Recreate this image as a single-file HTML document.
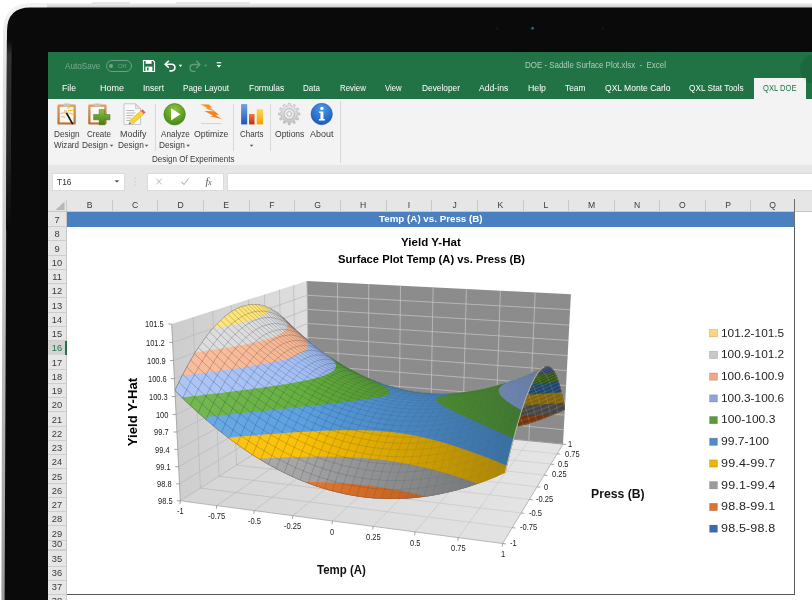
<!DOCTYPE html>
<html lang="en">
<head>
<meta charset="utf-8">
<title>DOE - Saddle Surface Plot.xlsx - Excel</title>
<style>
*{box-sizing:border-box;margin:0;padding:0}
html,body{width:812px;height:600px;overflow:hidden;background:#fff}
body{font-family:"Liberation Sans","DejaVu Sans",sans-serif;position:relative}
.abs{position:absolute}
#frame{left:3px;top:3px;width:830px;height:620px;border-radius:26px 0 0 0;background:linear-gradient(90deg,#dcdcdc 0,#e9e9e9 3px,#cfcfcf 4px,#cfcfcf 100%)}
#topstrip{left:47px;top:3px;width:780px;height:5px;background:linear-gradient(180deg,#f2f2f2,#cfcfcf)}
#bezel{left:7px;top:7.5px;width:830px;height:620px;border-radius:23px 0 0 0;background:#0a0a0a}
#bezelside{left:7px;top:30px;width:4px;height:600px;background:#262626}
#screen{left:47.5px;top:52px;width:780px;height:560px;background:#fff;overflow:hidden}
/* everything inside #screen is positioned in page coords via offset wrapper */
#s{left:-47.5px;top:-52px;width:812px;height:600px}
#green{left:47px;top:52px;width:770px;height:47px;background:#217346}
.tt{color:#fff;font-size:8px;line-height:10px;white-space:nowrap;filter:blur(.25px)}
.tab{top:83px;opacity:.96}
#acttab{left:754px;top:78px;width:52px;height:21px;background:#f3f3f3}
#ribbon{left:47px;top:99px;width:770px;height:65.5px;background:#f3f3f3}
#fbar{left:47px;top:164.5px;width:770px;height:34px;background:#e6e6e6}
.rb{color:#3b3b3b;font-size:8.6px;line-height:11.5px;text-align:center;white-space:nowrap;filter:blur(.25px)}
.sep{width:1px;background:#d8d8d8}
.box{background:#fff;border:1px solid #dadada;height:17.5px;top:173px}
#colhdr{left:47px;top:198px;width:770px;height:13.5px;background:#e6e6e6}
.ch{top:199.5px;width:45.5px;text-align:center;font-size:8.6px;line-height:11px;color:#3a3a3a;filter:blur(.25px)}
.cs{top:200px;width:1px;height:11.5px;background:#c9c9c9}
#rowhdr{left:47px;top:211.5px;width:19.5px;height:400px;background:#e6e6e6}
.rh{left:47.5px;width:19px;text-align:center;font-size:8.8px;line-height:11px;color:#3a3a3a;filter:blur(.25px)}
.rl{left:47.5px;width:19px;height:1px;background:#cdcdcd}
#band{left:66.5px;top:211.5px;width:728.3px;height:15px;background:#4a80c0;color:#fff;font-weight:bold;font-size:9.3px;line-height:15px;text-align:center}
.t{position:absolute;white-space:pre;filter:blur(.22px);transform-origin:0 50%}
</style>
</head>
<body>
<svg class="abs" style="left:0;top:0" width="812" height="600" viewBox="0 0 812 600">
<defs>
<linearGradient id="fr1" x1="0" y1="0" x2="0" y2="1"><stop offset="0" stop-color="#f3f3f3"/><stop offset=".12" stop-color="#e2e2e2"/><stop offset=".4" stop-color="#c8c8c8"/><stop offset="1" stop-color="#9c9c9c"/></linearGradient>
<linearGradient id="fr2" x1="0" y1="0" x2="0" y2="1"><stop offset="0" stop-color="#f4f4f4"/><stop offset="1" stop-color="#c6c6c6"/></linearGradient>
<linearGradient id="fr3" gradientUnits="userSpaceOnUse" x1="0" y1="40" x2="0" y2="230"><stop offset="0" stop-color="#0a0a0a"/><stop offset=".08" stop-color="#343434"/><stop offset=".6" stop-color="#262626"/><stop offset="1" stop-color="#0a0a0a"/></linearGradient>
</defs>
<path d="M3 32Q3 3 32 3H812V600H1.4Z" fill="url(#fr1)"/>
<rect x="47" y="3" width="765" height="5" fill="url(#fr2)"/>
<rect x="92" y="2.2" width="38" height="1.6" rx=".8" fill="#dedede"/><rect x="176" y="2.2" width="74" height="1.6" rx=".8" fill="#dedede"/>
<path d="M7 31Q7 7.5 30.5 7.5H812V600H4.6Z" fill="#0a0a0a"/>
<path d="M6.9 40L6 230H10.5L11.6 40Z" fill="url(#fr3)"/>
<circle cx="532.5" cy="28.3" r="1.7" fill="#1d3f52"/><circle cx="532.5" cy="28.3" r=".8" fill="#3f86a8"/>
<circle cx="497" cy="28.5" r="1.5" fill="#141414"/><circle cx="603" cy="28.5" r="1.5" fill="#141414"/>
</svg>
<div id="screen" class="abs"><div id="s" class="abs">
<div id="green" class="abs"></div>
<div id="acttab" class="abs"></div>
<div class="abs" style="left:105.5px;top:60px;width:26.5px;height:11.5px;border:1px solid rgba(255,255,255,.32);border-radius:6px"></div>
<div class="abs" style="left:109px;top:63.6px;width:4.4px;height:4.4px;border-radius:50%;background:rgba(255,255,255,.35)"></div>
<div class="t" style="left:118px;top:62.6px;font-size:6px;line-height:6px;color:rgba(255,255,255,.32);letter-spacing:.2px">Off</div>
<svg class="abs" style="left:140px;top:56px" width="90" height="20" viewBox="140 56 90 20">
<path d="M143.5 60.5h9.6l1.4 1.4v9.6h-11z" fill="none" stroke="#fff" stroke-width="1.2"/><rect x="145.6" y="60.5" width="6" height="3.3" fill="#fff"/><rect x="145.4" y="66.6" width="7" height="4.9" fill="#fff"/><rect x="147" y="67.6" width="1.6" height="2.8" fill="#217346"/>
<path d="M166 64.3h5.6a3.3 3.3 0 0 1 0 6.6h-2.2" fill="none" stroke="#fff" stroke-width="1.6"/><path d="M168.8 60.8l-3.6 3.5 3.6 3.5" fill="none" stroke="#fff" stroke-width="1.6"/>
<path d="M178.6 64.8h3.6l-1.8 2.2z" fill="#fff"/>
<g opacity=".3"><path d="M199 64.5h-5.6a3.4 3.4 0 0 0 0 6.8h2.2" fill="none" stroke="#fff" stroke-width="1.3"/><path d="M196.2 60.8l3.8 3.7-3.8 3.7" fill="none" stroke="#fff" stroke-width="1.3"/><path d="M204 64.8h3.2l-1.6 2z" fill="#fff"/></g>
<rect x="216.6" y="62.2" width="4.6" height="1.1" fill="#fff"/><path d="M216.6 65h4.6l-2.3 2.7z" fill="#fff"/>
</svg>
<div class="abs" style="left:800px;top:54px;width:30px;height:30px;border-radius:50%;background:rgba(0,0,0,.10)"></div>
<div id="ribbon" class="abs"></div>
<div class="abs sep" style="left:154.5px;top:104.0px;height:47.0px"></div>
<div class="abs sep" style="left:233.2px;top:104.0px;height:47.0px"></div>
<div class="abs sep" style="left:269.7px;top:104.0px;height:47.0px"></div>
<div class="abs sep" style="left:339.6px;top:101.0px;height:61.5px"></div>
<svg class="abs" style="left:0;top:0" width="400" height="170" viewBox="0 0 400 170">
<defs>
<linearGradient id="gcb" x1="0" y1="0" x2="0" y2="1"><stop offset="0" stop-color="#d9a066"/><stop offset="1" stop-color="#b86e30"/></linearGradient>
<linearGradient id="ggr" x1="0" y1="0" x2="0" y2="1"><stop offset="0" stop-color="#8fc24a"/><stop offset="1" stop-color="#3c7d14"/></linearGradient>
<radialGradient id="gpl" cx=".5" cy=".3" r=".8"><stop offset="0" stop-color="#8dc63f"/><stop offset="1" stop-color="#3f7f12"/></radialGradient>
<radialGradient id="gin" cx=".5" cy=".25" r=".85"><stop offset="0" stop-color="#4a9bee"/><stop offset="1" stop-color="#1353ae"/></radialGradient>
<linearGradient id="gbb" x1="0" y1="0" x2="0" y2="1"><stop offset="0" stop-color="#6fa3ea"/><stop offset="1" stop-color="#1e57b8"/></linearGradient>
<linearGradient id="gbr" x1="0" y1="0" x2="0" y2="1"><stop offset="0" stop-color="#f07a3a"/><stop offset="1" stop-color="#c42a0c"/></linearGradient>
<linearGradient id="gby" x1="0" y1="0" x2="0" y2="1"><stop offset="0" stop-color="#ffd95a"/><stop offset="1" stop-color="#f2a000"/></linearGradient>
<linearGradient id="ggear" x1="0" y1="0" x2="0" y2="1"><stop offset="0" stop-color="#ececec"/><stop offset="1" stop-color="#c2c2c2"/></linearGradient>
</defs>
<rect x="57.4" y="104.6" width="18.4" height="20" rx="1.3" fill="url(#gcb)"/><rect x="59.7" y="106.8" width="13.8" height="15.6" fill="#fbf8f3"/><rect x="63.4" y="103.4" width="6.4" height="3" rx="1" fill="#c9c3bb"/>
<path d="M60.5 113.5l5.5-1.2M61 116.6l4.4.6" stroke="#f2b070" stroke-width="1"/>
<path d="M68 110.6l5.6-.4M68.4 112.8l5 1.6M67.4 108.6l3.6-2.4" stroke="#f6c21a" stroke-width="1.1"/>
<path d="M65.4 111l7 12.6" stroke="#1a1a1a" stroke-width="1.7" stroke-linecap="round"/>
<path d="M65 110.4l1.4 2.4" stroke="#eee" stroke-width="1.7"/>
<rect x="88.2" y="104.6" width="18.4" height="20" rx="1.3" fill="url(#gcb)"/><rect x="90.5" y="106.8" width="13.8" height="15.6" fill="#fbf8f3"/><rect x="94.2" y="103.4" width="6.4" height="3" rx="1" fill="#c9c3bb"/>
<path d="M99.2 109.6h5.4v5h5.4v5.2h-5.4v5h-5.4v-5h-5.6v-5.2h5.6z" fill="url(#ggr)" stroke="#3a7510" stroke-width=".5"/>
<path d="M124 103.8h11.6l5 5v15.6H124z" fill="#fafafa" stroke="#b9b9b9" stroke-width=".8"/><path d="M135.6 103.8v5h5z" fill="#e4e4e4" stroke="#b9b9b9" stroke-width=".6"/>
<path d="M126.4 110.5h8M126.4 113h9M126.4 115.5h7M126.4 118h5M126.4 120.5h4" stroke="#b0b0b0" stroke-width=".9"/>
<path d="M129.2 124.2l1-4 10.6-9.4 3 3.2-10.6 9.4z" fill="#f7d536" stroke="#c9a514" stroke-width=".5"/><path d="M140.8 110.8l1.8-1.6 3 3.2-1.8 1.6z" fill="#e2605a"/><path d="M129.2 124.2l1-4 3 3.2z" fill="#e8c9a0"/><path d="M129.2 124.2l.4-1.6 1.2 1.2z" fill="#333"/>
<circle cx="174.6" cy="114.3" r="10.7" fill="url(#gpl)" stroke="#3f7a14" stroke-width=".6"/><path d="M171 108.2l9.4 6.1-9.4 6.1z" fill="#fff"/>
<path d="M200.4 104.3 L208.9 104.6 L212.4 107.5 L209.6 107.6 L214.9 111.2 L204.7 108.6 L207.8 108.2Z" fill="#f6922c"/>
<path d="M204.3 110.9 L214.7 111.3 L218.9 114.8 L215.5 114.9 L222.0 119.3 L209.5 116.1 L213.3 115.7Z" fill="#f58220"/>
<path d="M201 123.6h20.5" stroke="#d2d2d2" stroke-width="1"/>
<rect x="241.1" y="104.1" width="6.1" height="20.3" fill="url(#gbb)"/><rect x="249" y="114" width="5.5" height="10.4" fill="url(#gbr)"/><rect x="256.7" y="109.1" width="6.4" height="15.3" fill="url(#gby)"/>
<path d="M297.4 112.9 L299.9 113.0 L299.9 115.0 L297.4 115.1 L296.9 117.2 L298.9 118.5 L297.9 120.2 L295.8 119.0 L294.2 120.6 L295.4 122.7 L293.7 123.7 L292.4 121.7 L290.3 122.2 L290.2 124.7 L288.2 124.7 L288.1 122.2 L286.0 121.7 L284.7 123.7 L283.0 122.7 L284.2 120.6 L282.6 119.0 L280.5 120.2 L279.5 118.5 L281.5 117.2 L281.0 115.1 L278.5 115.0 L278.5 113.0 L281.0 112.9 L281.5 110.8 L279.5 109.5 L280.5 107.8 L282.6 109.0 L284.2 107.4 L283.0 105.3 L284.7 104.3 L286.0 106.3 L288.1 105.8 L288.2 103.3 L290.2 103.3 L290.3 105.8 L292.4 106.3 L293.7 104.3 L295.4 105.3 L294.2 107.4 L295.8 109.0 L297.9 107.8 L298.9 109.5 L296.9 110.8Z" fill="url(#ggear)" stroke="#adadad" stroke-width=".6"/>
<circle cx="289.2" cy="114.0" r="5.2" fill="#ececec" stroke="#a8a8a8" stroke-width=".7"/><circle cx="289.2" cy="114.0" r="2.4" fill="#f6f6f6" stroke="#a0a0a0" stroke-width=".7"/>
<circle cx="321.7" cy="114" r="10.7" fill="url(#gin)" stroke="#1a56a8" stroke-width=".5"/>
<circle cx="321.9" cy="108.4" r="1.7" fill="#fff"/><path d="M319.2 111.6h4.2v7.4h1.5v1.5h-6v-1.5h1.6v-5.9h-1.3z" fill="#fff"/>
</svg>
<svg class="abs" style="left:0;top:0" width="400" height="200"><path d="M109.8 144.7h3.6l-1.8 2z" fill="#555"/><path d="M144.8 144.7h3.6l-1.8 2z" fill="#555"/><path d="M186.4 144.7h3.6l-1.8 2z" fill="#555"/><path d="M249.8 144.7h3.6l-1.8 2z" fill="#555"/></svg>
<div id="fbar" class="abs"></div>
<div class="abs box" style="left:52px;width:72.5px"></div>
<div class="abs box" style="left:146.5px;width:77.5px"></div>
<div class="abs box" style="left:227px;width:600px"></div>
<svg class="abs" style="left:100px;top:170px" width="130" height="24" viewBox="100 170 130 24">
<path d="M114.6 180.2h4.6l-2.3 2.6z" fill="#555"/>
<g fill="#b5b5b5"><circle cx="135" cy="178" r=".55"/><circle cx="135" cy="181.5" r=".55"/><circle cx="135" cy="185" r=".55"/></g>
<path d="M156.3 178.7l5.4 5.6m0-5.6l-5.4 5.6" stroke="#b9b9b9" stroke-width="1" fill="none"/>
<path d="M181.6 182l2.4 2.5 4.6-6" stroke="#b9b9b9" stroke-width="1.1" fill="none"/>
</svg>
<div class="t" style="left:205.5px;top:175.6px;font-family:'Liberation Serif',serif;font-style:italic;font-size:10.5px;line-height:11px;color:#555;letter-spacing:-.3px">f<span style="font-size:7.5px">x</span></div>
<div id="colhdr" class="abs"></div>
<div id="rowhdr" class="abs"></div>
<div class="abs cs" style="left:66.0px"></div>
<div class="abs cs" style="left:112.2px"></div>
<div class="abs cs" style="left:157.2px"></div>
<div class="abs cs" style="left:202.8px"></div>
<div class="abs cs" style="left:248.5px"></div>
<div class="abs cs" style="left:294.2px"></div>
<div class="abs cs" style="left:339.9px"></div>
<div class="abs cs" style="left:385.6px"></div>
<div class="abs cs" style="left:431.2px"></div>
<div class="abs cs" style="left:476.9px"></div>
<div class="abs cs" style="left:522.6px"></div>
<div class="abs cs" style="left:568.3px"></div>
<div class="abs cs" style="left:614.0px"></div>
<div class="abs cs" style="left:659.1px"></div>
<div class="abs cs" style="left:704.7px"></div>
<div class="abs cs" style="left:750.2px"></div>
<div class="abs cs" style="left:793.8px"></div>
<div class="abs" style="left:47px;top:211px;width:770px;height:1px;background:#c6c6c6"></div>
<div class="abs" style="left:66px;top:211.5px;width:1px;height:400px;background:#c6c6c6"></div>
<svg class="abs" style="left:47px;top:198px" width="20" height="14"><path d="M17.5 3.5v8.5h-9z" fill="#b7b7b7"/></svg>
<div class="abs rl" style="top:226.1px"></div>
<div class="abs rl" style="top:240.3px"></div>
<div class="abs rl" style="top:254.6px"></div>
<div class="abs rl" style="top:268.9px"></div>
<div class="abs rl" style="top:283.1px"></div>
<div class="abs rl" style="top:297.4px"></div>
<div class="abs rl" style="top:311.6px"></div>
<div class="abs rl" style="top:325.9px"></div>
<div class="abs rl" style="top:340.1px"></div>
<div class="abs rl" style="top:354.4px"></div>
<div class="abs rl" style="top:368.6px"></div>
<div class="abs rl" style="top:382.9px"></div>
<div class="abs rl" style="top:397.1px"></div>
<div class="abs rl" style="top:411.4px"></div>
<div class="abs rl" style="top:425.6px"></div>
<div class="abs rl" style="top:439.9px"></div>
<div class="abs rl" style="top:454.1px"></div>
<div class="abs rl" style="top:468.4px"></div>
<div class="abs rl" style="top:482.6px"></div>
<div class="abs rl" style="top:496.9px"></div>
<div class="abs rl" style="top:511.1px"></div>
<div class="abs rl" style="top:525.4px"></div>
<div class="abs rl" style="top:539.6px"></div>
<div class="abs rl" style="top:539.8px"></div>
<div class="abs rl" style="top:548.8px"></div>
<div class="abs rl" style="top:550.3px"></div>
<div class="abs rl" style="top:565.5px"></div>
<div class="abs rl" style="top:579.9px"></div>
<div class="abs rl" style="top:594.1px"></div>
<div class="abs" style="left:47.5px;top:340.6px;width:19px;height:14.2px;background:#d3d3d3"></div>
<div class="abs" style="left:65px;top:340.6px;width:1.5px;height:14.2px;background:#217346"></div>
<div id="band" class="abs"></div>
<div class="abs" style="left:66.5px;top:226.5px;width:728.3px;height:368.3px;border:1px solid #5a5a5a;border-top:none;border-left:none;background:#fff"></div>
<div class="abs" style="left:793.8px;top:199px;width:1px;height:28px;background:#6f6f6f"></div>
<svg class="abs" style="left:0;top:0;filter:blur(.3px)" width="812" height="600" viewBox="0 0 812 600"><defs>
<linearGradient id="shd" gradientUnits="userSpaceOnUse" x1="300" y1="0" x2="530" y2="0"><stop offset="0" stop-color="#000" stop-opacity="0"/><stop offset="1" stop-color="#001020" stop-opacity=".36"/></linearGradient>
<linearGradient id="shl" gradientUnits="userSpaceOnUse" x1="170" y1="0" x2="330" y2="0"><stop offset="0" stop-color="#fff" stop-opacity=".14"/><stop offset="1" stop-color="#fff" stop-opacity="0"/></linearGradient>
<linearGradient id="msh" gradientUnits="userSpaceOnUse" x1="170" y1="0" x2="520" y2="0"><stop offset="0" stop-color="#1c2a40" stop-opacity=".5"/><stop offset=".45" stop-color="#1c2a40" stop-opacity=".34"/><stop offset=".8" stop-color="#1c2a40" stop-opacity=".1"/><stop offset="1" stop-color="#1c2a40" stop-opacity=".06"/></linearGradient>
<linearGradient id="gfl" gradientUnits="userSpaceOnUse" x1="180" y1="0" x2="565" y2="0"><stop offset="0" stop-color="#d5d5d5"/><stop offset="1" stop-color="#e5e5e5"/></linearGradient>
<linearGradient id="glw" gradientUnits="userSpaceOnUse" x1="172" y1="0" x2="308" y2="0"><stop offset="0" stop-color="#cdcdcd"/><stop offset="1" stop-color="#dfdfdf"/></linearGradient>
<linearGradient id="gfg" gradientUnits="userSpaceOnUse" x1="180" y1="0" x2="565" y2="0"><stop offset="0" stop-color="#b8b8b8"/><stop offset="1" stop-color="#cfcfcf"/></linearGradient>
</defs><polygon points="180.3,500.8 502.6,543.5 563.0,444.1 308.9,419.2" fill="url(#gfl)" />
<polygon points="180.3,500.8 171.7,324.0 306.9,281.0 308.9,419.2" fill="url(#glw)" />
<polygon points="308.9,419.2 306.9,281.0 570.9,294.2 563.0,444.1" fill="#8c8c8c" />
<g><line x1="216.8" y1="505.6" x2="338.4" y2="422.1" stroke="url(#gfg)" stroke-width="0.75" /><line x1="200.4" y1="488.1" x2="512.2" y2="527.6" stroke="url(#gfg)" stroke-width="0.75" /><line x1="200.4" y1="488.1" x2="193.0" y2="317.2" stroke="#bababa" stroke-width="0.75" /><line x1="254.3" y1="510.6" x2="368.5" y2="425.1" stroke="url(#gfg)" stroke-width="0.75" /><line x1="219.0" y1="476.2" x2="521.1" y2="513.0" stroke="url(#gfg)" stroke-width="0.75" /><line x1="219.0" y1="476.2" x2="212.7" y2="310.9" stroke="#bababa" stroke-width="0.75" /><line x1="292.9" y1="515.7" x2="399.2" y2="428.1" stroke="url(#gfg)" stroke-width="0.75" /><line x1="236.5" y1="465.1" x2="529.4" y2="499.4" stroke="url(#gfg)" stroke-width="0.75" /><line x1="236.5" y1="465.1" x2="231.1" y2="305.1" stroke="#bababa" stroke-width="0.75" /><line x1="332.5" y1="520.9" x2="430.6" y2="431.1" stroke="url(#gfg)" stroke-width="0.75" /><line x1="252.8" y1="454.8" x2="537.1" y2="486.8" stroke="url(#gfg)" stroke-width="0.75" /><line x1="252.8" y1="454.8" x2="248.3" y2="299.6" stroke="#bababa" stroke-width="0.75" /><line x1="373.2" y1="526.3" x2="462.6" y2="434.3" stroke="url(#gfg)" stroke-width="0.75" /><line x1="268.2" y1="445.1" x2="544.2" y2="475.1" stroke="url(#gfg)" stroke-width="0.75" /><line x1="268.2" y1="445.1" x2="264.4" y2="294.5" stroke="#bababa" stroke-width="0.75" /><line x1="415.1" y1="531.9" x2="495.4" y2="437.5" stroke="url(#gfg)" stroke-width="0.75" /><line x1="282.6" y1="435.9" x2="550.9" y2="464.1" stroke="url(#gfg)" stroke-width="0.75" /><line x1="282.6" y1="435.9" x2="279.5" y2="289.7" stroke="#bababa" stroke-width="0.75" /><line x1="458.2" y1="537.6" x2="528.8" y2="440.8" stroke="url(#gfg)" stroke-width="0.75" /><line x1="296.1" y1="427.3" x2="557.2" y2="453.8" stroke="url(#gfg)" stroke-width="0.75" /><line x1="296.1" y1="427.3" x2="293.6" y2="285.2" stroke="#bababa" stroke-width="0.75" /><line x1="179.5" y1="483.8" x2="308.7" y2="405.8" stroke="#bababa" stroke-width="0.75" /><line x1="178.6" y1="466.7" x2="308.5" y2="392.3" stroke="#bababa" stroke-width="0.75" /><line x1="177.8" y1="449.4" x2="308.3" y2="378.8" stroke="#bababa" stroke-width="0.75" /><line x1="176.9" y1="432.0" x2="308.1" y2="365.1" stroke="#bababa" stroke-width="0.75" /><line x1="176.1" y1="414.4" x2="307.9" y2="351.3" stroke="#bababa" stroke-width="0.75" /><line x1="175.2" y1="396.6" x2="307.7" y2="337.4" stroke="#bababa" stroke-width="0.75" /><line x1="174.3" y1="378.7" x2="307.5" y2="323.5" stroke="#bababa" stroke-width="0.75" /><line x1="173.5" y1="360.6" x2="307.3" y2="309.4" stroke="#bababa" stroke-width="0.75" /><line x1="172.6" y1="342.4" x2="307.1" y2="295.3" stroke="#bababa" stroke-width="0.75" /><line x1="338.4" y1="422.1" x2="337.5" y2="282.5" stroke="#c4c4c4" stroke-width="0.75" /><line x1="368.5" y1="425.1" x2="368.7" y2="284.1" stroke="#c4c4c4" stroke-width="0.75" /><line x1="399.2" y1="428.1" x2="400.5" y2="285.7" stroke="#c4c4c4" stroke-width="0.75" /><line x1="430.6" y1="431.1" x2="433.1" y2="287.3" stroke="#c4c4c4" stroke-width="0.75" /><line x1="462.6" y1="434.3" x2="466.4" y2="289.0" stroke="#c4c4c4" stroke-width="0.75" /><line x1="495.4" y1="437.5" x2="500.4" y2="290.7" stroke="#c4c4c4" stroke-width="0.75" /><line x1="528.8" y1="440.8" x2="535.2" y2="292.4" stroke="#c4c4c4" stroke-width="0.75" /><line x1="308.7" y1="405.8" x2="563.8" y2="429.7" stroke="#c4c4c4" stroke-width="0.75" /><line x1="308.5" y1="392.3" x2="564.5" y2="415.1" stroke="#c4c4c4" stroke-width="0.75" /><line x1="308.3" y1="378.8" x2="565.3" y2="400.4" stroke="#c4c4c4" stroke-width="0.75" /><line x1="308.1" y1="365.1" x2="566.1" y2="385.5" stroke="#c4c4c4" stroke-width="0.75" /><line x1="307.9" y1="351.3" x2="566.9" y2="370.6" stroke="#c4c4c4" stroke-width="0.75" /><line x1="307.7" y1="337.4" x2="567.7" y2="355.6" stroke="#c4c4c4" stroke-width="0.75" /><line x1="307.5" y1="323.5" x2="568.4" y2="340.4" stroke="#c4c4c4" stroke-width="0.75" /><line x1="307.3" y1="309.4" x2="569.2" y2="325.1" stroke="#c4c4c4" stroke-width="0.75" /><line x1="307.1" y1="295.3" x2="570.1" y2="309.7" stroke="#c4c4c4" stroke-width="0.75" /><line x1="180.3" y1="500.8" x2="308.9" y2="419.2" stroke="#bcbcbc" stroke-width="1.0" /><line x1="308.9" y1="419.2" x2="563.0" y2="444.1" stroke="#9a9a9a" stroke-width="1.0" /><line x1="180.3" y1="500.8" x2="171.7" y2="324.0" stroke="#9a9a9a" stroke-width="0.8" /><line x1="180.3" y1="500.8" x2="502.6" y2="543.5" stroke="#a8a8a8" stroke-width="0.8" /><line x1="502.6" y1="543.5" x2="563.0" y2="444.1" stroke="#a8a8a8" stroke-width="0.8" /><line x1="308.9" y1="419.2" x2="306.9" y2="281.0" stroke="#b8b8b8" stroke-width="0.8" /></g>
<g fill-rule="evenodd"><path d="M542.4 368.1 540.3 370.4 538.1 373.1 534.6 378.8 532.1 383.9 529.9 388.8 525.6 399.9 520.8 414.1 515.6 432.1 511.1 449.1 505.7 471.6 505.1 472.6 494.9 477.2 482.1 482.2 466.6 487.4 455.1 490.7 439.9 494.2 428.6 496.2 417.1 497.7 405.1 498.7 401.4 498.8 399.9 499.0 384.6 499.0 382.9 498.8 375.1 498.5 366.9 497.7 359.1 496.7 352.9 495.7 343.9 494.0 330.4 490.7 315.9 486.2 301.9 480.9 289.4 475.4 276.4 468.9 266.4 463.4 255.6 456.9 247.1 451.4 234.6 442.6 226.4 436.5 215.4 427.7 201.8 416.1 189.6 405.0 182.6 398.2 175.5 391.1 175.1 390.4 175.3 389.4 179.2 381.4 185.1 370.0 190.3 360.6 195.3 352.4 201.6 342.9 204.1 339.3 211.3 330.1 214.9 326.0 221.6 319.3 228.6 313.6 232.4 311.1 236.9 308.6 241.6 306.6 245.9 305.3 250.6 304.5 257.4 304.5 260.6 305.0 263.9 305.8 269.1 307.8 271.9 309.2 275.4 311.3 278.1 313.3 282.5 316.9 292.9 327.0 303.1 336.2 315.8 346.6 325.6 353.9 335.4 360.5 344.6 366.2 350.6 369.6 359.6 374.2 364.1 376.3 376.4 381.4 383.4 383.9 394.1 387.2 403.6 389.5 411.4 391.0 419.9 392.2 427.6 393.0 429.9 393.0 431.4 393.2 435.6 393.3 437.1 393.5 445.9 393.5 447.4 393.3 451.9 393.2 460.9 392.5 470.6 391.2 476.6 390.2 485.4 388.4 494.4 386.2 506.6 382.5 516.1 379.2 525.6 375.4 535.6 371.1 538.9 369.4 542.0 368.1Z" fill="#4472c4"/><path d="M542.4 368.1 540.3 370.4 538.1 373.1 534.6 378.8 532.1 383.9 529.9 388.8 525.6 399.9 520.8 414.1 515.6 432.1 511.1 449.1 505.7 471.6 505.1 472.6 494.9 477.2 482.1 482.2 466.6 487.4 455.1 490.7 439.9 494.2 428.6 496.2 417.1 497.7 405.1 498.7 401.4 498.8 399.9 499.0 384.6 499.0 382.9 498.8 375.1 498.5 366.9 497.7 359.1 496.7 352.9 495.7 343.9 494.0 330.4 490.7 315.9 486.2 301.9 480.9 289.4 475.4 276.4 468.9 266.4 463.4 255.6 456.9 247.1 451.4 234.6 442.6 226.4 436.5 215.4 427.7 201.8 416.1 189.6 405.0 182.6 398.2 175.5 391.1 175.1 390.4 175.3 389.4 179.2 381.4 185.1 370.0 190.3 360.6 195.3 352.4 201.6 342.9 204.1 339.3 211.3 330.1 214.9 326.0 221.6 319.3 228.6 313.6 232.4 311.1 236.9 308.6 241.6 306.6 245.9 305.3 250.6 304.5 257.4 304.5 260.6 305.0 263.9 305.8 269.1 307.8 271.9 309.2 275.4 311.3 278.1 313.3 282.5 316.9 292.9 327.0 303.1 336.2 315.8 346.6 325.6 353.9 335.4 360.5 344.6 366.2 350.6 369.6 359.6 374.2 364.1 376.3 376.4 381.4 383.4 383.9 394.1 387.2 403.6 389.5 411.4 391.0 419.9 392.2 427.6 393.0 429.9 393.0 431.4 393.2 435.6 393.3 437.1 393.5 445.9 393.5 447.4 393.3 451.9 393.2 460.9 392.5 470.6 391.2 476.6 390.2 485.4 388.4 494.4 386.2 506.6 382.5 516.1 379.2 525.6 375.4 535.6 371.1 538.9 369.4 542.0 368.1Z" fill="#e8782a"/><path d="M542.4 368.1 540.3 370.4 538.1 373.1 534.6 378.8 532.1 383.9 529.9 388.8 525.6 399.9 520.8 414.1 515.6 432.1 511.1 449.1 505.7 471.6 505.4 472.4 504.9 472.8 499.7 475.1 486.1 480.7 477.6 483.7 466.6 487.4 455.1 490.7 448.1 492.4 434.6 495.2 426.6 496.5 425.1 496.4 421.1 495.3 411.9 493.1 398.4 490.3 388.9 488.7 387.4 488.3 373.9 486.3 355.6 484.3 350.6 484.0 346.4 483.5 344.1 483.5 342.9 483.3 340.4 483.2 339.1 483.0 322.9 482.3 305.1 482.0 303.1 481.4 298.9 479.7 289.6 475.6 283.4 472.5 274.9 468.1 266.4 463.4 255.6 456.9 247.1 451.4 234.6 442.7 226.4 436.5 215.4 427.7 201.8 416.1 189.6 405.0 182.6 398.2 175.5 391.1 175.1 390.4 175.3 389.4 179.2 381.4 185.1 370.0 190.3 360.6 195.3 352.4 201.6 342.9 204.1 339.3 211.3 330.1 214.9 326.0 221.6 319.3 228.6 313.6 232.4 311.1 236.9 308.6 241.6 306.6 245.9 305.3 250.6 304.5 257.4 304.5 260.6 305.0 263.9 305.8 269.1 307.8 271.9 309.2 275.4 311.3 278.1 313.3 282.5 316.9 292.9 327.0 303.1 336.2 315.8 346.6 325.6 353.9 335.4 360.5 344.6 366.2 350.6 369.6 359.6 374.2 364.1 376.3 376.4 381.4 383.4 383.9 394.1 387.2 403.6 389.5 411.4 391.0 419.9 392.2 427.6 393.0 429.9 393.0 431.4 393.2 435.6 393.3 437.1 393.5 445.9 393.5 447.4 393.3 451.9 393.2 460.9 392.5 470.6 391.2 476.6 390.2 485.4 388.4 494.4 386.2 506.6 382.5 516.1 379.2 525.6 375.4 535.6 371.1 538.9 369.4 542.0 368.1Z" fill="#a3a3a3"/><path d="M542.4 368.1 540.3 370.4 538.1 373.1 534.6 378.8 532.1 383.9 529.9 388.8 525.6 399.9 520.8 414.1 515.6 432.1 511.1 449.1 505.5 472.1 504.7 472.9 494.9 477.2 486.1 480.7 477.9 483.6 476.9 483.4 467.4 480.1 451.1 474.8 439.9 471.5 424.6 467.6 413.4 465.0 401.6 462.8 394.4 461.7 391.1 461.0 379.6 459.5 360.4 457.8 357.6 457.7 356.4 457.5 352.9 457.5 351.6 457.3 346.4 457.0 341.1 457.0 339.6 456.8 327.1 456.7 324.1 456.5 316.9 456.5 315.6 456.7 314.6 456.6 313.4 456.7 302.4 456.8 300.6 457.0 292.4 457.0 290.9 457.2 285.4 457.3 284.1 457.5 281.1 457.5 275.6 458.0 270.4 458.0 269.1 458.2 265.4 458.3 264.1 458.5 258.6 458.7 246.9 451.2 234.6 442.7 226.4 436.5 215.4 427.7 201.8 416.1 189.8 405.1 175.8 391.4 175.1 390.4 175.3 389.4 179.2 381.4 185.1 370.0 190.3 360.6 195.3 352.4 201.6 342.9 204.1 339.3 211.3 330.1 214.9 326.0 221.6 319.3 228.6 313.6 232.4 311.1 236.9 308.6 241.6 306.6 245.9 305.3 250.6 304.5 257.4 304.5 260.6 305.0 263.9 305.8 269.1 307.8 271.9 309.2 275.4 311.3 278.1 313.3 282.5 316.9 292.9 327.0 303.1 336.2 315.8 346.6 325.6 353.9 335.4 360.5 344.6 366.2 350.6 369.6 359.6 374.2 364.1 376.3 376.4 381.4 383.4 383.9 394.1 387.2 403.6 389.5 411.4 391.0 419.9 392.2 427.6 393.0 429.9 393.0 431.4 393.2 435.6 393.3 437.1 393.5 445.9 393.5 447.4 393.3 451.9 393.2 460.9 392.5 470.6 391.2 476.6 390.2 485.4 388.4 494.4 386.2 506.6 382.5 516.1 379.2 525.6 375.4 535.6 371.1 538.9 369.4 542.0 368.1Z" fill="#fcc000"/><path d="M542.4 368.1 540.3 370.4 538.1 373.1 534.7 378.6 530.7 386.9 526.6 397.1 522.6 408.6 517.8 424.1 511.1 449.1 507.4 464.4 507.1 465.0 506.6 465.2 505.4 464.9 487.6 457.8 467.6 450.5 451.5 445.1 439.6 441.6 423.1 437.3 411.9 435.0 401.4 433.3 389.1 431.8 387.1 431.7 376.4 430.8 366.6 430.5 365.1 430.3 336.6 430.3 334.6 430.5 327.9 430.5 326.4 430.7 321.1 430.8 319.9 431.0 316.1 431.0 314.9 431.2 311.1 431.3 305.6 431.7 302.1 431.8 300.9 432.0 298.1 432.0 296.9 432.2 283.1 433.0 279.4 433.5 267.6 434.3 263.4 434.7 260.9 434.8 248.1 436.0 242.1 436.3 231.4 437.5 228.1 437.5 226.6 436.6 215.4 427.7 201.8 416.1 189.6 405.0 182.6 398.2 175.5 391.1 175.1 390.4 175.3 389.4 179.2 381.4 185.1 370.0 190.3 360.6 195.3 352.4 201.6 342.9 204.1 339.3 211.3 330.1 214.9 326.0 221.6 319.3 228.6 313.6 232.4 311.1 236.9 308.6 241.6 306.6 245.9 305.3 250.6 304.5 257.4 304.5 260.6 305.0 263.9 305.8 269.1 307.8 271.9 309.2 275.4 311.3 278.1 313.3 282.5 316.9 292.9 327.0 303.1 336.2 315.8 346.6 325.6 353.9 335.4 360.5 344.6 366.2 350.6 369.6 359.6 374.2 364.1 376.3 376.4 381.4 383.4 383.9 394.1 387.2 403.6 389.5 411.4 391.0 419.9 392.2 427.6 393.0 429.9 393.0 431.4 393.2 435.6 393.3 437.1 393.5 445.9 393.5 447.4 393.3 451.9 393.2 460.9 392.5 470.6 391.2 476.6 390.2 485.4 388.4 494.4 386.2 506.6 382.5 516.1 379.2 525.6 375.4 535.6 371.1 538.9 369.4 542.0 368.1Z" fill="#589fe2"/><path d="M175.1 390.1 179.2 381.4 185.2 369.9 190.3 360.6 195.3 352.4 201.6 342.9 204.1 339.3 211.3 330.1 215.0 325.9 221.6 319.3 226.4 315.3 232.4 311.1 236.9 308.6 241.9 306.5 246.1 305.3 250.6 304.5 256.9 304.5 260.9 305.1 266.1 306.6 271.6 309.1 275.4 311.3 278.1 313.3 282.5 316.9 292.9 327.0 303.1 336.2 315.6 346.5 325.6 353.9 335.6 360.7 344.6 366.2 350.6 369.6 360.1 374.4 376.4 382.1 383.9 386.1 388.5 389.1 390.2 390.9 390.6 392.1 390.1 393.4 389.1 394.2 385.6 395.7 377.6 397.5 366.6 399.2 340.9 402.5 307.6 406.2 301.1 406.8 298.4 407.2 291.6 407.8 289.1 408.2 284.9 408.5 282.4 409.0 280.4 409.0 256.9 411.7 249.9 412.3 247.4 412.7 244.9 412.8 242.1 413.2 228.9 414.5 220.9 415.5 218.6 415.6 203.9 417.2 203.1 417.1 201.9 416.2 189.6 405.0 175.6 391.2 175.1 390.6ZM542.4 368.1 540.4 370.3 538.3 372.9 535.8 376.6 532.1 383.9 529.8 388.9 526.6 397.1 523.3 406.4 517.8 424.1 514.0 437.9 513.6 438.1 511.9 437.6 485.9 426.2 455.4 412.3 444.3 406.6 440.1 404.2 437.6 402.2 436.5 401.1 436.1 400.4 436.1 399.1 436.5 398.4 437.1 397.8 438.4 397.1 443.1 395.6 453.9 393.5 470.6 391.2 476.6 390.2 485.4 388.4 494.4 386.2 502.1 383.9 508.9 381.7 518.1 378.4 531.1 373.1 541.4 368.4Z" fill="#62ae3a"/><path d="M175.1 390.4 175.3 389.4 182.8 374.4 190.2 360.9 193.3 355.6 202.1 342.1 207.1 335.3 211.3 330.1 215.0 325.9 221.6 319.3 228.6 313.6 233.6 310.3 236.9 308.6 239.4 307.4 243.9 305.8 248.6 304.8 250.9 304.5 257.1 304.5 260.9 305.1 264.6 306.1 268.9 307.7 271.9 309.2 275.4 311.3 278.1 313.3 282.5 316.9 293.0 327.1 306.4 339.0 315.8 346.6 327.4 355.1 331.5 358.4 333.1 360.0 334.4 361.6 335.4 363.4 336.0 364.9 336.0 366.6 335.7 367.6 334.2 370.1 330.9 372.6 325.1 375.2 319.9 376.9 311.4 379.2 301.6 381.2 289.4 383.5 286.6 383.8 285.1 384.2 256.4 388.5 250.9 389.0 249.1 389.5 243.1 390.0 239.4 390.7 237.4 390.8 219.1 393.2 208.4 394.3 193.4 396.2 191.1 396.3 186.9 397.0 181.9 397.3 181.4 397.0 175.5 391.1ZM499.6 393.9 498.8 391.9 498.8 389.9 499.0 388.9 499.9 387.3 501.5 385.6 502.6 384.8 507.4 382.3 518.1 378.4 525.6 375.4 535.6 371.1 538.9 369.4 542.0 368.1 542.4 368.1 540.3 370.4 537.3 374.4 534.7 378.6 532.1 383.9 527.3 395.1 522.4 409.5 521.9 410.1 521.1 410.0 514.4 406.2 506.9 401.2 504.3 399.1 501.4 396.2Z" fill="#a2bdf4"/><path d="M182.6 375.1 182.8 374.4 190.3 360.6 197.3 349.4 202.1 342.1 207.1 335.3 211.3 330.1 214.9 326.0 221.8 319.1 228.6 313.6 232.4 311.1 236.9 308.6 239.6 307.3 244.1 305.8 250.6 304.5 257.6 304.5 260.9 305.1 264.6 306.1 268.9 307.7 272.1 309.3 277.9 313.1 282.4 316.8 292.9 327.0 302.1 335.3 305.5 338.6 306.5 339.9 307.5 341.6 308.2 343.4 308.3 345.4 307.8 347.4 306.7 349.1 304.6 351.2 299.9 353.9 295.9 355.7 289.4 357.9 283.1 359.7 273.6 361.9 266.1 363.5 244.9 367.2 222.6 370.5 209.6 372.0 204.1 373.0 194.4 374.0 192.4 374.5 183.1 375.4ZM534.9 377.5 534.5 376.4 534.8 374.9 535.3 373.6 536.4 372.1 539.4 369.6 541.6 368.3 542.4 368.1 540.4 370.3 538.1 373.1 535.4 377.4 535.1 377.6Z" fill="#f9b48e"/><path d="M195.9 351.9 197.1 349.6 202.1 342.1 207.3 335.1 211.3 330.1 214.9 326.0 221.6 319.3 226.6 315.1 232.4 311.1 237.1 308.4 239.6 307.3 243.9 305.8 250.6 304.5 257.4 304.5 260.6 305.0 263.9 305.8 268.6 307.6 271.9 309.2 275.4 311.3 278.1 313.3 282.5 316.9 284.6 319.0 285.7 320.4 286.7 322.1 287.4 324.1 287.5 326.4 286.9 328.1 285.7 329.9 283.9 331.7 281.1 333.6 276.6 335.8 274.6 336.6 266.4 339.4 254.9 342.4 240.1 345.5 238.9 345.5 225.9 348.0 224.4 348.0 217.9 349.2 212.9 349.8 202.6 351.5 196.6 352.2 196.1 352.2Z" fill="#d9d9d9"/><path d="M213.5 327.9 215.0 325.9 221.5 319.4 226.6 315.1 228.6 313.6 233.9 310.2 237.1 308.4 241.9 306.5 245.9 305.3 250.4 304.5 257.4 304.5 260.6 305.0 263.9 305.8 268.6 307.6 269.8 308.4 269.8 309.1 269.1 310.4 267.9 312.0 266.1 313.4 264.1 314.7 259.4 317.2 255.9 318.5 248.1 321.0 236.6 323.9 225.4 326.2 220.1 327.0 218.6 327.5 213.9 328.1Z" fill="#ffe26c"/></g>
<path d="M542.4 368.1 540.3 370.4 538.1 373.1 534.6 378.8 532.1 383.9 529.9 388.8 525.6 399.9 520.8 414.1 515.6 432.1 511.1 449.1 505.7 471.6 505.1 472.6 494.9 477.2 482.1 482.2 466.6 487.4 455.1 490.7 439.9 494.2 428.6 496.2 417.1 497.7 405.1 498.7 401.4 498.8 399.9 499.0 384.6 499.0 382.9 498.8 375.1 498.5 366.9 497.7 359.1 496.7 352.9 495.7 343.9 494.0 330.4 490.7 315.9 486.2 301.9 480.9 289.4 475.4 276.4 468.9 266.4 463.4 255.6 456.9 247.1 451.4 234.6 442.6 226.4 436.5 215.4 427.7 201.8 416.1 189.6 405.0 182.6 398.2 175.5 391.1 175.1 390.4 175.3 389.4 179.2 381.4 185.1 370.0 190.3 360.6 195.3 352.4 201.6 342.9 204.1 339.3 211.3 330.1 214.9 326.0 221.6 319.3 228.6 313.6 232.4 311.1 236.9 308.6 241.6 306.6 245.9 305.3 250.6 304.5 257.4 304.5 260.6 305.0 263.9 305.8 269.1 307.8 271.9 309.2 275.4 311.3 278.1 313.3 282.5 316.9 292.9 327.0 303.1 336.2 315.8 346.6 325.6 353.9 335.4 360.5 344.6 366.2 350.6 369.6 359.6 374.2 364.1 376.3 376.4 381.4 383.4 383.9 394.1 387.2 403.6 389.5 411.4 391.0 419.9 392.2 427.6 393.0 429.9 393.0 431.4 393.2 435.6 393.3 437.1 393.5 445.9 393.5 447.4 393.3 451.9 393.2 460.9 392.5 470.6 391.2 476.6 390.2 485.4 388.4 494.4 386.2 506.6 382.5 516.1 379.2 525.6 375.4 535.6 371.1 538.9 369.4 542.0 368.1Z" fill="url(#shd)"/>
<path d="M542.4 368.1 540.3 370.4 538.1 373.1 534.6 378.8 532.1 383.9 529.9 388.8 525.6 399.9 520.8 414.1 515.6 432.1 511.1 449.1 505.7 471.6 505.1 472.6 494.9 477.2 482.1 482.2 466.6 487.4 455.1 490.7 439.9 494.2 428.6 496.2 417.1 497.7 405.1 498.7 401.4 498.8 399.9 499.0 384.6 499.0 382.9 498.8 375.1 498.5 366.9 497.7 359.1 496.7 352.9 495.7 343.9 494.0 330.4 490.7 315.9 486.2 301.9 480.9 289.4 475.4 276.4 468.9 266.4 463.4 255.6 456.9 247.1 451.4 234.6 442.6 226.4 436.5 215.4 427.7 201.8 416.1 189.6 405.0 182.6 398.2 175.5 391.1 175.1 390.4 175.3 389.4 179.2 381.4 185.1 370.0 190.3 360.6 195.3 352.4 201.6 342.9 204.1 339.3 211.3 330.1 214.9 326.0 221.6 319.3 228.6 313.6 232.4 311.1 236.9 308.6 241.6 306.6 245.9 305.3 250.6 304.5 257.4 304.5 260.6 305.0 263.9 305.8 269.1 307.8 271.9 309.2 275.4 311.3 278.1 313.3 282.5 316.9 292.9 327.0 303.1 336.2 315.8 346.6 325.6 353.9 335.4 360.5 344.6 366.2 350.6 369.6 359.6 374.2 364.1 376.3 376.4 381.4 383.4 383.9 394.1 387.2 403.6 389.5 411.4 391.0 419.9 392.2 427.6 393.0 429.9 393.0 431.4 393.2 435.6 393.3 437.1 393.5 445.9 393.5 447.4 393.3 451.9 393.2 460.9 392.5 470.6 391.2 476.6 390.2 485.4 388.4 494.4 386.2 506.6 382.5 516.1 379.2 525.6 375.4 535.6 371.1 538.9 369.4 542.0 368.1Z" fill="url(#shl)"/>
<g fill-rule="evenodd"><path d="M517.6 426.3 517.5 425.9 519.8 417.4 525.6 399.9 529.9 388.8 532.1 383.9 534.7 378.6 538.1 373.1 540.4 370.3 541.8 368.9 544.6 366.8 546.1 366.3 547.4 366.3 549.9 367.1 550.9 367.8 552.5 369.4 554.2 371.6 556.3 375.6 558.5 381.1 560.4 387.4 562.4 395.4 565.0 408.6 564.8 409.4 564.4 409.8 562.1 410.9 553.7 414.6 541.4 419.4 527.6 423.9 518.9 426.2Z" fill="#18305a"/><path d="M517.9 425.6 517.7 425.4 517.7 424.9 519.1 419.9 523.3 406.4 525.6 399.9 529.9 388.8 532.1 383.9 534.7 378.6 538.1 373.1 540.4 370.3 541.8 368.9 544.6 366.8 546.1 366.3 547.4 366.3 549.9 367.1 550.9 367.8 552.5 369.4 554.2 371.6 556.3 375.6 558.5 381.1 560.4 387.4 562.4 395.4 565.0 408.6 564.8 409.4 564.4 409.8 562.1 410.9 553.6 414.7 544.1 418.4 537.6 420.7 527.6 423.9 521.1 425.7Z" fill="#74340c"/><path d="M520.9 415.4 520.7 414.9 520.9 414.0 523.5 405.9 527.3 395.1 531.9 384.1 535.8 376.6 538.1 373.1 540.4 370.3 541.6 369.0 544.5 366.9 546.1 366.3 547.1 366.3 549.9 367.1 550.9 367.8 552.5 369.4 554.2 371.6 556.3 375.6 558.5 381.1 560.4 387.4 562.4 395.4 565.0 408.6 564.8 409.4 564.4 409.8 561.9 411.1 557.1 413.2 553.6 414.5 549.1 414.5 547.6 414.7 542.4 414.8 540.9 415.0 535.4 415.0 533.6 415.2 526.1 415.3 524.4 415.5Z" fill="#464646"/><path d="M524.4 404.9 524.2 404.6 524.2 404.1 525.5 400.1 530.7 386.9 534.7 378.6 538.1 373.1 541.4 369.3 544.6 366.8 546.4 366.3 547.4 366.3 549.4 366.8 550.6 367.6 552.7 369.6 554.9 372.9 556.3 375.6 558.4 380.9 559.9 385.6 561.7 392.1 563.8 402.4 563.6 402.8 560.4 403.2 549.4 403.8 548.1 404.0 544.6 404.0 543.4 404.2 539.9 404.3 538.6 404.5 534.6 404.5 533.4 404.7 529.4 404.8 527.9 405.0Z" fill="#82640a"/><path d="M528.0 394.6 527.8 394.4 527.9 393.9 529.8 388.9 532.1 383.9 534.6 378.9 537.6 373.9 540.3 370.4 541.6 369.0 544.5 366.9 546.1 366.3 547.1 366.3 549.6 367.0 550.9 367.8 552.6 369.5 553.7 370.9 555.1 373.1 556.3 375.6 558.9 382.4 561.4 391.1 561.4 391.9 560.9 392.2 558.4 392.5 556.4 392.5 542.4 393.7 539.9 393.8 535.6 394.2Z" fill="#1c466e"/><path d="M532.1 384.1 532.6 382.9 535.8 376.6 538.1 373.1 541.5 369.1 544.4 366.9 546.4 366.3 547.4 366.3 549.6 367.0 550.9 367.8 552.7 369.6 554.2 371.6 556.2 375.4 558.4 381.1 558.1 381.6 556.4 382.0 533.1 384.5 532.4 384.4Z" fill="#2f5618"/><path d="M537.3 374.6 537.4 374.1 538.1 373.1 540.3 370.4 541.5 369.1 544.6 366.8 546.4 366.3 547.4 366.3 549.6 367.0 550.6 367.6 552.7 369.6 554.0 371.6 553.9 371.9 553.4 372.2 537.6 374.8Z" fill="#2b3868"/><path d="" fill="#6a4a38"/></g>
<path d="M174.9 390.3 182.1 375.8 189.2 362.7 196.1 351.1 203.4 340.4 210.5 331.1 217.5 323.3 224.4 316.9 227.9 314.1 231.5 311.7 235.0 309.6 238.4 307.9 241.9 306.5 245.3 305.5 248.6 304.8 251.9 304.5 255.2 304.4 258.8 304.8 262.0 305.4 265.5 306.5 268.6 307.7 272.0 309.5 275.1 311.3 278.4 313.7 281.7 316.4 284.9 319.5M174.9 390.3 185.0 400.3 195.1 409.8 205.2 418.9 215.4 427.5 225.5 435.6 235.7 443.2 245.9 450.3 255.3 456.4 265.5 462.6 275.8 468.4 286.1 473.6 295.6 478.0 306.0 482.3 316.5 486.1 327.0 489.4 336.7 492.0 347.3 494.4 357.2 496.1 368.0 497.5 378.0 498.4 388.9 498.8 399.1 498.7 409.3 498.1 419.7 497.1 430.1 495.7 440.7 493.7 451.3 491.3 462.0 488.4 472.9 485.0 483.9 481.2 495.0 476.8 505.2 472.3M182.7 398.0 189.8 383.4 196.8 370.3 203.7 358.6 210.4 348.3 217.5 338.8 224.4 330.8 231.2 324.3 234.4 321.7 237.9 319.1 241.0 317.1 244.4 315.2 247.8 313.7 251.2 312.6 254.5 311.7 257.8 311.2 261.1 311.1 264.6 311.2 267.8 311.7 270.9 312.6 274.0 313.7 277.4 315.2 280.4 316.9 283.7 319.1 287.0 321.7 290.2 324.6M178.9 382.1 188.9 392.0 199.0 401.5 209.1 410.5 219.1 419.0 229.2 427.0 239.3 434.6 249.5 441.6 258.8 447.7 269.0 453.9 279.2 459.5 289.5 464.7 299.0 469.1 309.3 473.3 319.7 477.1 330.2 480.3 339.9 482.9 350.4 485.2 360.3 486.9 371.0 488.3 380.9 489.1 391.8 489.4 401.9 489.3 412.1 488.7 422.4 487.7 432.8 486.2 443.3 484.2 453.8 481.8 464.5 478.9 475.3 475.5 486.2 471.6 497.3 467.2 507.5 462.7M190.4 405.5 197.1 391.6 204.0 378.2 210.8 366.4 217.5 355.9 224.1 346.7 231.0 338.5 237.7 331.7 240.9 329.0 244.3 326.3 247.4 324.2 250.8 322.2 254.2 320.6 257.5 319.3 260.8 318.4 264.0 317.8 267.2 317.5 270.4 317.5 273.6 317.9 276.7 318.6 279.7 319.5 283.1 320.9 286.1 322.5 289.3 324.6 292.2 326.8 295.4 329.5M182.8 374.3 192.9 384.2 202.9 393.6 212.9 402.5 222.9 411.0 232.9 418.9 243.0 426.4 253.0 433.4 262.4 439.5 272.5 445.6 282.6 451.2 292.8 456.3 302.3 460.6 312.6 464.8 322.1 468.2 332.5 471.5 342.2 474.1 352.7 476.4 362.4 478.1 373.1 479.4 383.0 480.2 393.8 480.6 403.9 480.4 414.0 479.9 424.2 478.8 434.5 477.4 445.0 475.4 455.5 473.0 466.1 470.1 476.8 466.7 487.7 462.8 498.6 458.4 509.7 453.5M198.2 412.6 204.7 398.6 211.6 385.2 218.3 373.3 225.0 362.7 231.5 353.5 238.3 345.2 244.6 338.6 251.1 333.0 254.2 330.8 257.5 328.8 260.5 327.2 263.8 325.8 267.0 324.8 270.3 324.1 273.4 323.7 276.6 323.6 279.7 323.9 282.8 324.4 285.8 325.3 288.8 326.5 291.7 327.9 295.0 329.9 297.8 331.9 301.0 334.5M186.8 367.0 196.7 376.8 206.7 386.1 216.6 395.0 226.6 403.4 236.6 411.3 246.6 418.7 256.6 425.7 265.9 431.7 275.9 437.7 286.0 443.2 296.2 448.3 305.6 452.6 315.8 456.7 325.3 460.1 335.6 463.3 345.2 465.9 355.7 468.1 365.4 469.8 376.0 471.1 385.9 471.9 396.6 472.2 406.6 472.0 416.7 471.4 426.9 470.4 437.1 468.9 447.5 466.9 458.0 464.4 468.5 461.5 479.2 458.1 490.0 454.2 500.9 449.8 511.9 444.9M205.9 419.5 212.4 405.4 219.2 391.9 225.5 380.5 232.1 369.8 238.5 360.4 244.9 352.3 251.1 345.6 257.6 339.7 260.6 337.5 263.9 335.3 266.9 333.6 270.1 332.1 273.0 331.1 276.2 330.2 279.3 329.7 282.5 329.5 285.5 329.6 288.6 330.0 291.6 330.8 294.5 331.8 297.5 333.1 300.3 334.8 303.2 336.7 306.3 339.1M190.7 360.1 200.6 369.9 210.5 379.1 220.4 387.9 230.3 396.2 240.2 404.1 250.1 411.5 260.1 418.4 269.3 424.3 279.3 430.3 289.4 435.8 299.5 440.8 308.8 445.0 319.0 449.1 328.5 452.5 338.7 455.6 348.3 458.1 358.7 460.4 368.3 462.0 378.9 463.3 388.7 464.0 399.4 464.3 409.3 464.1 419.4 463.5 429.5 462.4 439.7 460.9 450.0 458.9 460.4 456.4 470.9 453.5 481.5 450.0 492.2 446.1 503.1 441.7 514.0 436.8M213.7 426.1 220.1 411.9 226.5 399.1 232.7 387.5 239.2 376.6 245.6 367.1 251.9 358.8 258.0 351.9 264.1 346.2 267.1 343.9 270.3 341.6 273.3 339.8 276.5 338.2 279.3 337.0 282.5 336.0 285.3 335.5 288.4 335.1 291.1 335.1 294.1 335.4 297.1 336.0 300.0 336.8 302.9 338.0 305.8 339.5 308.6 341.2 311.7 343.5M194.5 353.7 204.4 363.3 214.2 372.6 224.0 381.3 233.9 389.5 243.8 397.3 253.7 404.6 263.6 411.5 272.7 417.4 282.7 423.3 292.7 428.7 302.7 433.7 312.1 437.9 322.2 442.0 331.6 445.3 341.8 448.4 351.3 450.9 361.6 453.0 371.2 454.6 381.7 455.9 391.5 456.6 402.1 456.8 412.0 456.6 422.0 456.0 432.0 454.9 442.2 453.3 452.4 451.3 462.8 448.8 473.2 445.9 483.8 442.4 494.4 438.5 505.2 434.1 516.1 429.1M221.5 432.4 227.8 418.2 234.1 405.2 240.3 393.6 246.3 383.2 252.7 373.5 258.9 365.1 265.0 358.0 270.9 352.2 276.8 347.6 279.7 345.7 282.9 344.0 285.7 342.7 288.8 341.7 291.6 341.0 294.6 340.6 297.3 340.4 300.3 340.6 303.2 341.1 306.1 341.9 309.0 343.0 311.8 344.3 314.6 346.0 317.3 348.0M198.4 347.6 208.1 357.3 217.9 366.4 227.7 375.1 237.5 383.3 247.3 391.0 257.2 398.3 267.0 405.0 276.1 410.9 286.0 416.8 296.0 422.2 306.0 427.1 315.2 431.2 325.3 435.2 334.6 438.5 344.8 441.6 354.2 444.0 364.5 446.2 374.1 447.7 384.5 448.9 394.2 449.6 404.8 449.8 414.6 449.6 424.6 448.9 434.6 447.8 444.7 446.2 454.8 444.2 465.1 441.7 475.5 438.7 486.0 435.3 496.6 431.3 507.3 426.9 518.2 422.0M229.3 438.4 235.6 424.1 241.7 411.1 247.8 399.4 253.8 388.9 259.7 379.6 265.9 371.1 271.6 364.2 277.5 358.2 283.3 353.4 286.1 351.4 289.3 349.6 292.1 348.2 294.8 347.2 297.6 346.4 300.6 345.8 303.2 345.6 306.2 345.6 308.8 345.9 311.7 346.5 314.5 347.5 317.3 348.7 320.1 350.2 322.8 352.0M202.2 342.1 211.9 351.6 221.6 360.7 231.3 369.3 241.1 377.4 250.8 385.1 260.6 392.3 270.4 399.0 279.5 404.8 289.4 410.6 299.2 416.0 309.2 420.9 318.4 425.0 328.4 428.9 337.7 432.2 347.8 435.2 357.2 437.6 367.4 439.7 376.9 441.3 387.3 442.4 396.9 443.1 407.4 443.3 417.2 443.0 427.1 442.3 437.1 441.2 447.1 439.6 457.2 437.5 467.4 435.0 477.8 432.1 488.2 428.6 498.8 424.7 509.4 420.2 520.2 415.3M237.1 444.2 242.9 430.6 249.0 417.4 255.1 405.5 261.0 394.9 266.8 385.5 272.9 376.8 278.5 369.8 284.4 363.7 290.1 358.7 295.7 355.0 298.5 353.5 301.2 352.3 303.9 351.4 306.9 350.8 309.5 350.4 312.4 350.4 315.0 350.6 317.8 351.1 320.3 351.9 323.1 353.0 325.8 354.4 328.5 356.1M205.9 336.9 215.6 346.4 225.3 355.4 234.9 363.9 244.6 372.0 254.3 379.6 264.1 386.8 273.8 393.4 282.8 399.2 292.6 405.0 302.5 410.3 312.3 415.1 321.5 419.1 331.4 423.1 340.7 426.3 350.7 429.3 360.1 431.6 370.2 433.7 379.7 435.2 390.0 436.4 399.6 437.0 410.1 437.2 419.8 436.9 429.6 436.2 439.5 435.0 449.5 433.4 459.6 431.3 469.7 428.8 480.0 425.8 490.4 422.4 500.8 418.4 511.4 414.0 522.2 409.1M244.9 449.6 250.7 436.0 256.7 422.7 262.3 411.4 268.2 400.7 274.0 391.1 279.6 382.8 285.2 375.6 291.0 369.2 296.6 364.0 302.2 360.1 307.6 357.3 310.3 356.3 313.2 355.5 315.8 355.1 318.4 355.0 320.9 355.1 323.7 355.5 326.2 356.1 329.0 357.1 331.7 358.4 334.3 359.9M209.7 332.1 219.3 341.5 228.9 350.5 238.5 359.0 248.1 367.0 257.8 374.5 267.5 381.6 277.1 388.3 286.1 394.0 295.9 399.7 305.6 404.9 315.5 409.7 324.6 413.7 334.5 417.6 343.6 420.8 353.6 423.8 362.9 426.1 373.0 428.1 382.4 429.6 392.7 430.7 402.2 431.3 412.6 431.5 422.3 431.2 432.1 430.4 441.9 429.3 451.8 427.7 461.8 425.6 472.0 423.1 482.2 420.1 492.5 416.6 502.9 412.7 513.4 408.2 524.1 403.3M252.7 454.8 258.4 441.1 264.4 427.8 270.0 416.4 275.7 405.6 281.4 395.9 287.0 387.5 292.5 380.3 297.9 374.2 303.2 369.1 308.7 365.0 314.0 362.0 316.7 360.9 319.3 360.1 321.9 359.6 324.4 359.3 326.9 359.3 329.7 359.6 332.2 360.1 334.9 361.0 337.2 362.0 339.9 363.5M213.4 327.7 222.9 337.1 232.5 346.0 242.0 354.4 251.6 362.4 261.2 369.9 270.8 376.9 280.5 383.5 289.4 389.1 299.1 394.8 308.8 400.0 318.5 404.8 327.6 408.7 337.4 412.6 346.6 415.7 356.5 418.7 365.7 421.0 375.8 423.0 385.2 424.4 395.3 425.5 404.8 426.1 415.2 426.2 424.8 425.9 434.5 425.2 444.3 424.0 454.1 422.3 464.1 420.3 474.1 417.7 484.3 414.7 494.5 411.3 504.9 407.3 515.4 402.9 526.0 398.0M260.6 459.7 266.2 445.9 271.8 433.3 277.3 421.8 283.0 410.8 288.3 401.6 293.8 392.9 299.2 385.5 304.6 379.2 309.8 374.0 315.2 369.6 320.5 366.5 323.1 365.3 325.7 364.4 328.2 363.8 330.7 363.4 333.2 363.3 336.0 363.5 338.4 364.0 340.8 364.7 343.1 365.6 345.7 366.9M217.0 323.8 226.5 333.1 236.0 341.9 245.5 350.3 255.1 358.2 264.6 365.6 274.1 372.6 283.7 379.1 292.6 384.7 302.2 390.3 311.9 395.5 321.6 400.2 330.6 404.2 340.4 408.0 349.5 411.1 359.3 414.0 368.5 416.2 378.5 418.2 387.8 419.7 398.0 420.7 407.4 421.3 417.7 421.4 427.2 421.1 436.9 420.3 446.6 419.1 456.4 417.5 466.3 415.4 476.3 412.8 486.4 409.9 496.6 406.4 506.9 402.5 517.3 398.0 527.8 393.1M268.4 464.3 274.0 450.4 279.5 437.7 284.9 426.2 290.2 415.7 295.5 406.4 300.9 397.6 306.3 390.1 311.6 383.6 316.7 378.3 322.1 373.8 327.0 370.7 329.6 369.5 332.1 368.5 334.6 367.8 337.1 367.3 339.6 367.2 342.0 367.2 344.4 367.6 346.7 368.2 349.1 369.0 351.7 370.2M220.7 320.2 230.1 329.4 239.5 338.2 249.0 346.5 258.5 354.3 267.9 361.7 277.4 368.7 287.0 375.1 295.8 380.7 305.3 386.3 315.0 391.4 324.6 396.1 333.6 400.0 343.3 403.7 352.3 406.8 362.1 409.7 371.3 411.9 381.2 413.9 390.5 415.3 400.5 416.3 409.9 416.9 420.1 417.0 429.6 416.6 439.2 415.9 448.9 414.6 458.6 413.0 468.5 410.9 478.4 408.4 488.4 405.4 498.6 401.9 508.8 398.0 519.1 393.6 529.6 388.7M276.3 468.6 281.5 455.5 286.9 442.7 292.3 431.0 297.5 420.4 302.7 411.0 308.1 402.1 313.1 394.8 318.3 388.2 323.4 382.7 328.4 378.3 333.2 374.9 338.3 372.4 340.8 371.6 343.2 371.0 345.7 370.8 348.1 370.7 350.4 371.0 352.8 371.5 355.1 372.2 357.6 373.3M224.3 317.0 233.6 326.2 243.0 334.9 252.4 343.1 261.8 350.9 271.3 358.2 280.7 365.1 290.2 371.5 298.9 377.1 308.4 382.6 318.0 387.7 327.6 392.3 336.5 396.2 346.2 399.9 355.1 403.0 364.9 405.8 374.0 408.0 383.9 410.0 393.1 411.3 403.1 412.3 412.4 412.9 422.5 413.0 432.0 412.6 441.5 411.8 451.1 410.6 460.8 408.9 470.6 406.9 480.5 404.3 490.4 401.3 500.5 397.9 510.7 394.0 521.0 389.6 531.3 384.7M284.2 472.7 289.3 459.5 294.7 446.6 300.0 434.9 305.2 424.2 310.3 414.7 315.3 406.3 320.2 398.9 325.4 392.1 330.4 386.5 335.3 382.0 340.1 378.5 344.8 376.0 347.3 375.1 349.7 374.5 352.1 374.1 354.4 374.0 356.8 374.2 359.1 374.6 363.6 376.1M227.8 314.2 237.1 323.3 246.5 331.9 255.8 340.1 265.2 347.9 274.5 355.1 283.9 362.0 293.3 368.3 302.0 373.8 311.5 379.3 321.0 384.4 330.5 388.9 339.4 392.8 349.0 396.5 357.9 399.5 367.6 402.3 376.6 404.5 386.5 406.4 395.6 407.8 405.6 408.8 414.8 409.3 424.9 409.3 434.3 409.0 443.8 408.2 453.3 407.0 463.0 405.3 472.7 403.2 482.5 400.7 492.4 397.7 502.4 394.3 512.5 390.3 522.7 386.0 533.1 381.1M292.1 476.4 297.2 463.2 302.5 450.2 307.4 439.1 312.5 428.4 317.6 418.7 322.5 410.2 327.4 402.7 332.4 395.8 337.1 390.4 342.0 385.7 346.7 382.0 351.4 379.4 355.9 377.8 358.3 377.3 360.6 377.1 362.9 377.1 365.2 377.4 367.4 378.0 369.6 378.8M231.4 311.7 240.6 320.8 249.9 329.4 259.2 337.5 268.5 345.2 277.8 352.4 287.1 359.2 296.5 365.5 305.1 370.9 314.5 376.4 324.0 381.4 333.4 385.9 342.2 389.7 351.8 393.4 360.7 396.4 370.3 399.2 379.3 401.3 389.1 403.2 398.1 404.6 408.0 405.6 417.2 406.0 427.3 406.1 436.6 405.7 446.0 404.9 455.5 403.7 465.1 402.0 474.8 400.0 484.5 397.4 494.3 394.5 504.3 391.0 514.3 387.1 524.5 382.8 534.7 377.9M300.1 479.9 305.1 466.6 310.0 454.4 314.9 443.1 319.9 432.3 324.9 422.5 329.8 413.8 334.6 406.2 339.3 399.6 343.9 394.0 348.7 389.1 353.4 385.3 358.0 382.5 362.4 380.7 364.8 380.2 367.1 379.9 371.3 380.1 373.5 380.5 375.7 381.2M234.8 309.7 244.1 318.6 253.3 327.2 262.5 335.2 271.7 342.9 281.0 350.0 290.3 356.8 299.5 363.0 308.2 368.4 317.5 373.8 326.9 378.8 336.3 383.3 345.0 387.1 354.5 390.7 363.4 393.7 373.0 396.4 381.9 398.6 391.6 400.5 400.6 401.8 410.4 402.7 419.6 403.2 429.6 403.3 438.9 402.9 448.2 402.1 457.7 400.8 467.2 399.2 476.8 397.1 486.5 394.6 496.2 391.6 506.1 388.2 516.1 384.3 526.2 380.0 536.4 375.1M308.1 483.1 313.0 469.7 317.9 457.4 322.7 446.1 327.7 435.2 332.3 426.0 337.1 417.2 341.8 409.4 346.5 402.7 351.0 397.0 355.7 392.1 360.1 388.3 364.6 385.4 369.0 383.5 373.3 382.5 377.5 382.5 379.7 382.8 381.9 383.4M238.3 307.9 247.5 316.8 256.6 325.3 265.8 333.3 275.0 340.9 284.2 348.0 293.4 354.7 302.6 360.9 311.2 366.3 320.5 371.7 329.8 376.6 339.1 381.1 347.8 384.8 357.3 388.4 366.0 391.3 375.6 394.1 384.4 396.2 394.1 398.0 403.1 399.3 412.8 400.3 421.9 400.7 431.8 400.8 441.1 400.4 450.4 399.6 459.7 398.4 469.2 396.7 478.7 394.6 488.4 392.1 498.1 389.2 507.9 385.7 517.8 381.9 527.8 377.6 538.0 372.8M316.1 486.0 321.0 472.6 325.8 460.2 330.5 448.9 335.1 438.5 339.7 429.2 344.4 420.3 349.1 412.4 353.7 405.6 358.1 399.8 362.5 395.0 366.8 391.1 371.3 388.1 375.6 386.0 379.9 384.9 384.0 384.7 388.0 385.5M241.7 306.6 250.8 315.4 259.9 323.8 269.0 331.8 278.1 339.3 287.3 346.4 296.4 353.0 305.6 359.2 314.1 364.5 323.4 369.8 332.6 374.7 341.9 379.2 350.6 382.9 360.0 386.4 368.7 389.3 378.2 392.0 387.0 394.1 396.6 396.0 405.5 397.3 415.2 398.2 424.2 398.6 434.1 398.7 443.2 398.3 452.5 397.5 461.8 396.3 471.2 394.6 480.7 392.5 490.2 390.0 499.9 387.1 509.7 383.7 519.5 379.8 529.5 375.5 539.5 370.8M324.2 488.6 328.7 476.0 333.4 463.5 338.0 452.1 342.6 441.6 347.1 432.1 351.8 423.1 356.1 415.6 360.6 408.7 365.1 402.7 369.4 397.7 373.6 393.7 377.7 390.6 382.0 388.3 386.2 387.0 390.3 386.7 394.3 387.2M245.1 305.5 254.1 314.3 263.2 322.7 272.2 330.6 281.3 338.0 290.4 345.1 299.5 351.6 308.6 357.8 317.1 363.1 326.2 368.3 335.5 373.2 344.7 377.6 353.3 381.3 362.6 384.8 371.3 387.7 380.7 390.4 389.4 392.5 399.0 394.3 407.8 395.5 417.5 396.5 426.5 396.9 436.3 396.9 445.4 396.5 454.6 395.7 463.8 394.5 473.2 392.9 482.6 390.8 492.1 388.3 501.7 385.4 511.4 382.0 521.2 378.2 531.0 373.9 541.0 369.2M332.2 490.9 336.7 478.2 341.4 465.7 345.9 454.2 350.5 443.7 354.9 434.2 359.2 425.7 363.5 418.1 367.9 411.0 372.3 405.0 376.5 399.9 380.7 395.8 384.8 392.6 388.8 390.4 392.9 388.9 396.7 388.4 400.6 388.8M248.5 304.8 257.4 313.6 266.4 321.9 275.4 329.7 284.4 337.1 293.5 344.1 302.5 350.6 311.6 356.7 320.0 362.0 329.1 367.2 338.2 372.0 347.4 376.4 356.0 380.0 365.2 383.6 373.8 386.4 383.2 389.1 391.9 391.1 401.4 392.9 410.2 394.2 419.8 395.1 428.7 395.5 438.4 395.6 447.5 395.2 456.6 394.3 465.8 393.1 475.1 391.5 484.4 389.4 493.9 386.9 503.4 384.0 513.0 380.7 522.8 376.9 532.6 372.6 542.5 367.9M340.4 492.9 344.7 480.2 349.4 467.6 353.6 456.8 358.0 446.2 362.4 436.6 366.7 428.0 370.9 420.3 375.3 413.1 379.3 407.3 383.5 402.1 387.6 397.8 391.6 394.5 395.5 392.1 399.6 390.6 403.3 389.9 407.2 390.2M251.8 304.5 260.7 313.1 269.6 321.4 278.6 329.2 286.8 336.0 295.8 342.9 304.8 349.4 313.8 355.5 322.1 360.8 331.2 366.0 340.3 370.8 349.4 375.2 357.9 378.9 367.1 382.4 375.6 385.2 384.9 387.9 393.6 390.0 403.0 391.8 411.7 393.1 421.3 394.0 430.1 394.5 439.8 394.5 448.8 394.2 457.9 393.4 467.0 392.2 476.2 390.6 485.5 388.6 494.9 386.2 504.3 383.3 513.9 380.0 523.5 376.3 533.3 372.1 543.1 367.4M348.5 494.6 357.1 470.1 361.3 459.2 365.7 448.4 370.0 438.7 374.2 430.0 378.3 422.2 382.4 415.4 386.3 409.4 390.5 404.0 394.5 399.6 398.5 396.2 402.3 393.7 406.1 392.0 409.8 391.2 413.6 391.3M255.1 304.4 270.1 318.7 284.4 331.2 291.9 337.3 299.5 343.1 313.9 353.3 321.5 358.2 329.1 362.8 336.7 367.1 343.7 370.7 351.4 374.3 358.4 377.4 366.1 380.5 373.2 383.0 381.0 385.5 388.1 387.5 396.0 389.3 403.2 390.8 411.1 392.0 418.4 392.9 426.4 393.5 433.8 393.8 441.9 393.8 449.3 393.6 456.8 393.0 464.4 392.2 472.7 390.9 480.4 389.5 488.1 387.8 495.8 385.7M356.7 496.1 365.2 471.4 369.3 460.5 373.6 449.7 377.9 439.9 382.0 431.2 386.1 423.4 390.1 416.5 394.0 410.5 398.0 405.1 401.8 400.9 405.7 397.4 409.4 394.8 413.1 393.1 416.7 392.2 420.2 392.2M258.3 304.7 271.2 317.1 283.4 327.9 295.6 337.9 307.9 347.1 320.2 355.5 332.6 363.1 345.0 369.8 357.5 375.7 370.1 380.8 382.7 385.0 395.5 388.4 408.3 390.9 421.3 392.6 433.7 393.4 446.9 393.4 459.5 392.6M365.0 497.2 373.3 472.5 377.4 461.5 381.4 451.3 385.3 442.1 389.4 433.2 393.4 425.2 397.3 418.2 401.1 412.1 404.9 406.8 408.6 402.5 412.4 398.7 416.1 396.0 419.8 394.1 423.3 393.0 426.8 392.9M261.5 305.3 272.3 315.7 282.4 324.8 293.2 334.0 303.3 341.9 314.2 349.8 324.4 356.6 334.6 362.8 344.9 368.5 355.9 373.9 366.3 378.4 376.7 382.3 387.2 385.6 397.8 388.4 408.4 390.6 419.1 392.1 430.0 393.1M373.3 498.0 381.5 473.2 385.5 462.2 389.4 452.0 393.2 442.8 397.3 433.8 401.0 426.3 404.8 419.2 408.6 413.0 412.3 407.7 415.9 403.2 419.7 399.4 423.1 396.7 426.7 394.7 430.2 393.6 433.6 393.3M264.7 306.2 273.4 314.6 282.1 322.6 290.8 330.2 299.5 337.4 308.2 344.1 317.0 350.4 325.8 356.3 333.9 361.3 342.8 366.4 351.6 371.1 360.5 375.3 368.8 378.8 377.8 382.2 386.8 385.2 395.9 387.7 404.3 389.6M381.6 498.6 389.4 474.5 397.2 453.1 401.0 443.7 405.0 434.7 408.6 427.1 412.4 419.9 416.1 413.6 419.8 408.2 423.3 403.7 426.8 400.1 430.2 397.2 433.7 395.1 436.9 393.9 440.2 393.5M267.8 307.4 282.4 321.3 296.4 333.5 310.4 344.5 324.5 354.5 331.9 359.3 338.6 363.4 346.1 367.6 352.8 371.1 360.3 374.7 367.1 377.8 374.7 380.8 381.5 383.3M390.0 498.8 397.7 474.6 405.4 453.2 409.1 443.8 412.8 435.3 416.3 427.6 420.1 420.3 423.5 414.3 427.1 408.8 430.5 404.2 433.9 400.4 437.3 397.5 440.7 395.2 443.9 393.9 447.1 393.4M270.9 308.8 282.1 319.6 293.4 329.7 304.6 339.1 315.9 347.7 327.2 355.6 338.6 362.9 350.0 369.4 360.8 374.8M398.5 498.7 406.1 474.4 413.6 452.9 417.3 443.5 420.8 435.0 424.4 427.3 427.8 420.5 431.1 414.4 434.6 408.8 438.1 404.1 441.4 400.3 444.6 397.3 447.8 395.1 450.9 393.7 454.1 393.0M274.0 310.6 282.5 318.9 291.0 326.7 299.6 334.1 308.1 341.2 316.7 347.8 325.3 353.9 333.9 359.7 342.5 365.1M407.0 498.3 414.5 474.0 421.6 453.1 425.2 443.6 428.7 435.0 432.2 427.2 435.6 420.3 438.8 414.2 442.3 408.5 445.4 404.1 448.7 400.1 451.9 397.0 455.0 394.7 458.0 393.2 461.1 392.4M277.0 312.7 289.4 324.5 301.1 334.9 313.5 345.1 325.3 353.8M415.6 497.6 422.9 473.2 429.9 452.3 436.7 434.7 440.1 426.9 443.4 419.9 446.6 413.7 450.0 408.0 453.1 403.4 456.3 399.4 459.4 396.2 462.4 393.9 465.4 392.3 468.3 391.5M280.0 315.0 294.9 329.1 302.0 335.4 309.8 342.0M424.2 496.5 431.2 472.9 438.1 451.8 444.7 434.1 448.0 426.2 451.3 419.1 454.4 412.9 457.5 407.4 460.6 402.8 463.7 398.6 466.6 395.6 469.5 393.0 472.4 391.3 475.3 390.4M282.9 317.6 294.5 328.7M432.9 495.2 439.7 471.5 446.5 450.4 453.0 432.6 456.1 425.2 459.3 418.1 462.4 411.8 465.4 406.3 468.3 401.6 471.2 397.6 474.0 394.4 476.9 391.8 479.8 390.0 482.5 389.0M441.7 493.5 448.4 469.8 454.8 449.3 461.2 431.4 467.3 416.7 470.3 410.4 473.3 404.8 476.2 400.0 479.0 396.0 481.7 392.8 484.6 390.2 487.3 388.3 490.0 387.3M450.5 491.5 457.1 467.7 463.4 447.2 469.4 429.9 475.4 415.1 478.4 408.6 481.3 403.0 484.1 398.2 486.8 394.2 489.5 390.9 492.3 388.2 494.8 386.4 497.4 385.3M459.4 489.2 465.7 466.2 471.8 445.5 477.8 428.0 483.6 413.1 486.3 407.1 489.1 401.3 491.9 396.4 494.6 392.3 497.2 388.9 499.9 386.1 502.4 384.2 504.9 383.0M468.4 486.5 474.5 463.5 480.6 442.8 486.4 425.3 492.1 410.3 494.7 404.3 497.5 398.5 500.0 394.0 502.6 389.8 505.1 386.4 507.6 383.7 510.0 381.8 512.5 380.5M477.5 483.5 483.5 460.4 489.4 439.7 495.1 422.1 500.4 407.7 503.0 401.6 505.7 395.8 508.1 391.2 510.7 387.0 513.2 383.5 515.6 380.8 517.9 378.9 520.3 377.5M486.7 480.1 492.5 457.0 498.1 437.0 503.6 419.3 508.9 404.8 514.0 392.8 516.4 388.1 518.9 383.9 521.3 380.4 523.6 377.7 525.8 375.7 528.0 374.4M495.9 476.4 501.6 453.2 507.1 433.2 512.3 416.2 517.4 401.5 522.2 389.8 524.5 385.1 526.9 380.7 529.3 377.1 531.5 374.3 533.7 372.3 535.8 370.9M505.2 472.3 510.8 449.1 516.2 429.1 521.2 412.0 526.2 397.4 530.9 385.7 533.1 381.0 535.5 376.7 537.6 373.3 539.7 370.5 541.9 368.4 543.9 367.1" fill="none" stroke="url(#msh)" stroke-width="0.55"/>
<path d="M542.9 367.7 545.4 366.5M541.9 368.7 546.7 366.3M540.0 370.3 548.1 366.5M539.0 371.9 549.4 367.0M537.2 374.0 550.6 367.8M536.1 376.1 544.0 372.7 551.9 368.9M534.4 378.8 543.7 374.8 553.0 370.4M533.3 381.4 544.1 376.9 554.2 372.1M531.6 384.5 543.8 379.5 555.3 374.2M530.6 387.6 543.4 382.5 556.4 376.5M528.9 391.2 543.1 385.7 557.5 379.1M527.2 395.0 535.3 392.1 542.7 389.1 550.9 385.5 558.5 382.0M520.2 415.5 522.7 424.9M526.2 398.7 535.0 395.6 543.1 392.5 551.3 389.0 559.5 385.1M524.1 403.7 527.0 412.7 529.6 423.0M524.5 402.9 533.9 399.7 542.7 396.4 551.5 392.7 560.5 388.6M528.1 393.0 530.3 398.4 532.5 405.0 534.6 412.4 536.5 420.8M522.9 407.3 532.9 404.0 542.3 400.6 551.8 396.6 561.4 392.2M532.0 383.6 533.5 386.2 535.1 389.4 538.1 397.4 540.9 407.0 543.5 418.3M521.9 411.6 531.9 408.5 541.9 404.9 552.0 400.8 562.3 396.1M536.0 376.0 538.1 378.3 540.1 381.3 542.0 385.1 543.8 389.6 545.5 394.8 547.3 401.0 550.6 415.5M520.3 416.4 530.8 413.2 541.5 409.5 552.3 405.2 563.2 400.3M540.0 370.3 541.2 370.7 542.5 371.4 544.9 373.7 547.4 377.3 549.6 382.1 551.8 387.9 553.8 394.9 555.8 403.2 557.7 412.5M518.7 421.3 529.8 418.1 541.1 414.3 552.5 409.8 564.0 404.7M544.0 367.0 545.6 366.4 547.1 366.3 548.5 366.6 550.1 367.4 551.5 368.5 552.9 370.2 555.5 374.5 558.1 380.8 560.5 388.5 562.7 398.2 564.8 409.3M517.1 426.3 528.8 423.2 540.7 419.3 552.7 414.7 564.8 409.3" fill="none" stroke="#e6dca8" stroke-opacity="0.38" stroke-width="0.45"/>
<path d="M505.2 472.3 510.8 449.1 516.2 429.1 521.2 412.0 526.2 397.4 530.9 385.7 533.1 381.0 535.5 376.7 537.6 373.3 539.7 370.5 541.9 368.4 543.9 367.1" fill="none" stroke="#f3ecc6" stroke-opacity="0.75" stroke-width="0.8"/><path d="M180.3 500.8h-3.4M179.5 483.8h-3.4M178.6 466.7h-3.4M177.8 449.4h-3.4M176.9 432.0h-3.4M176.1 414.4h-3.4M175.2 396.6h-3.4M174.3 378.7h-3.4M173.5 360.6h-3.4M172.6 342.4h-3.4M171.7 324.0h-3.4M180.3 500.8l-.5 3.2M502.6 543.5l3.2 .4M216.8 505.6l-.5 3.2M512.2 527.6l3.2 .4M254.3 510.6l-.5 3.2M521.1 513.0l3.2 .4M292.9 515.7l-.5 3.2M529.4 499.4l3.2 .4M332.5 520.9l-.5 3.2M537.1 486.8l3.2 .4M373.2 526.3l-.5 3.2M544.2 475.1l3.2 .4M415.1 531.9l-.5 3.2M550.9 464.1l3.2 .4M458.2 537.6l-.5 3.2M557.2 453.8l3.2 .4M502.6 543.5l-.5 3.2M563.0 444.1l3.2 .4" stroke="#8c8c8c" stroke-width=".8" fill="none"/><rect x="709.6" y="329.6" width="7.8" height="7.2" fill="#ffd580" stroke="rgba(0,0,0,.22)" stroke-width=".7"/><rect x="709.6" y="351.3" width="7.8" height="7.2" fill="#c8c8c8" stroke="rgba(0,0,0,.22)" stroke-width=".7"/><rect x="709.6" y="373.0" width="7.8" height="7.2" fill="#f4a582" stroke="rgba(0,0,0,.22)" stroke-width=".7"/><rect x="709.6" y="394.8" width="7.8" height="7.2" fill="#8ea4dc" stroke="rgba(0,0,0,.22)" stroke-width=".7"/><rect x="709.6" y="416.5" width="7.8" height="7.2" fill="#5b9a3c" stroke="rgba(0,0,0,.22)" stroke-width=".7"/><rect x="709.6" y="438.2" width="7.8" height="7.2" fill="#4d8cc8" stroke="rgba(0,0,0,.22)" stroke-width=".7"/><rect x="709.6" y="459.9" width="7.8" height="7.2" fill="#eeb211" stroke="rgba(0,0,0,.22)" stroke-width=".7"/><rect x="709.6" y="481.6" width="7.8" height="7.2" fill="#9b9b9b" stroke="rgba(0,0,0,.22)" stroke-width=".7"/><rect x="709.6" y="503.4" width="7.8" height="7.2" fill="#dc7332" stroke="rgba(0,0,0,.22)" stroke-width=".7"/><rect x="709.6" y="525.1" width="7.8" height="7.2" fill="#3c68b8" stroke="rgba(0,0,0,.22)" stroke-width=".7"/></svg>
<div class="t" style="left:92.6px;top:405.0px;width:80px;height:14px;text-align:center;font-weight:bold;font-size:13px;line-height:14px;color:#000;transform-origin:center;transform:rotate(-90deg);letter-spacing:.12px">Yield Y-Hat</div>
<div class="t" style="left:64.6px;top:61.8px;font-size:8.4px;line-height:8.4px;color:rgba(255,255,255,.38);transform:scaleX(0.974);">AutoSave</div>
<div class="t" style="left:524.5px;top:61.8px;font-size:8.2px;line-height:8.2px;color:rgba(255,255,255,.62);transform:scaleX(0.968);">DOE - Saddle Surface Plot.xlsx  -  Excel</div>
<div class="t" style="left:62.0px;top:84.3px;font-size:8.4px;line-height:8.4px;color:#fff;transform:scaleX(1.037);">File</div>
<div class="t" style="left:100.0px;top:84.3px;font-size:8.4px;line-height:8.4px;color:#fff;transform:scaleX(1.074);">Home</div>
<div class="t" style="left:143.0px;top:84.3px;font-size:8.4px;line-height:8.4px;color:#fff;transform:scaleX(1.002);">Insert</div>
<div class="t" style="left:183.0px;top:84.3px;font-size:8.4px;line-height:8.4px;color:#fff;transform:scaleX(0.978);">Page Layout</div>
<div class="t" style="left:248.5px;top:84.3px;font-size:8.4px;line-height:8.4px;color:#fff;transform:scaleX(1.006);">Formulas</div>
<div class="t" style="left:302.8px;top:84.3px;font-size:8.4px;line-height:8.4px;color:#fff;transform:scaleX(0.960);">Data</div>
<div class="t" style="left:339.7px;top:84.3px;font-size:8.4px;line-height:8.4px;color:#fff;transform:scaleX(0.943);">Review</div>
<div class="t" style="left:385.2px;top:84.3px;font-size:8.4px;line-height:8.4px;color:#fff;transform:scaleX(0.921);">View</div>
<div class="t" style="left:422.0px;top:84.3px;font-size:8.4px;line-height:8.4px;color:#fff;transform:scaleX(0.995);">Developer</div>
<div class="t" style="left:479.2px;top:84.3px;font-size:8.4px;line-height:8.4px;color:#fff;transform:scaleX(1.031);">Add-ins</div>
<div class="t" style="left:528.0px;top:84.3px;font-size:8.4px;line-height:8.4px;color:#fff;transform:scaleX(1.044);">Help</div>
<div class="t" style="left:565.0px;top:84.3px;font-size:8.4px;line-height:8.4px;color:#fff;transform:scaleX(1.001);">Team</div>
<div class="t" style="left:605.0px;top:84.3px;font-size:8.4px;line-height:8.4px;color:#fff;transform:scaleX(1.017);">QXL Monte Carlo</div>
<div class="t" style="left:689.0px;top:84.3px;font-size:8.4px;line-height:8.4px;color:#fff;transform:scaleX(0.984);">QXL Stat Tools</div>
<div class="t" style="left:762.5px;top:84.3px;font-size:8.4px;line-height:8.4px;color:#217346;transform:scaleX(0.907);">QXL DOE</div>
<div class="t" style="left:53.5px;top:129.7px;font-size:8.8px;line-height:8.8px;color:#3a3a3a;transform:scaleX(0.931);">Design</div>
<div class="t" style="left:54.0px;top:141.2px;font-size:8.8px;line-height:8.8px;color:#3a3a3a;transform:scaleX(0.913);">Wizard</div>
<div class="t" style="left:86.8px;top:129.7px;font-size:8.8px;line-height:8.8px;color:#3a3a3a;transform:scaleX(0.905);">Create</div>
<div class="t" style="left:82.4px;top:141.2px;font-size:8.8px;line-height:8.8px;color:#3a3a3a;transform:scaleX(0.942);">Design</div>
<div class="t" style="left:120.0px;top:129.7px;font-size:8.8px;line-height:8.8px;color:#3a3a3a;transform:scaleX(1.018);">Modify</div>
<div class="t" style="left:117.6px;top:141.2px;font-size:8.8px;line-height:8.8px;color:#3a3a3a;transform:scaleX(0.942);">Design</div>
<div class="t" style="left:160.7px;top:129.7px;font-size:8.8px;line-height:8.8px;color:#3a3a3a;transform:scaleX(0.920);">Analyze</div>
<div class="t" style="left:159.0px;top:141.2px;font-size:8.8px;line-height:8.8px;color:#3a3a3a;transform:scaleX(0.942);">Design</div>
<div class="t" style="left:194.0px;top:129.7px;font-size:8.8px;line-height:8.8px;color:#3a3a3a;transform:scaleX(0.991);">Optimize</div>
<div class="t" style="left:240.0px;top:129.7px;font-size:8.8px;line-height:8.8px;color:#3a3a3a;transform:scaleX(0.907);">Charts</div>
<div class="t" style="left:274.6px;top:129.7px;font-size:8.8px;line-height:8.8px;color:#3a3a3a;transform:scaleX(0.969);">Options</div>
<div class="t" style="left:309.6px;top:129.7px;font-size:8.8px;line-height:8.8px;color:#3a3a3a;transform:scaleX(1.017);">About</div>
<div class="t" style="left:152.0px;top:155.0px;font-size:8.8px;line-height:8.8px;color:#3a3a3a;transform:scaleX(0.912);">Design Of Experiments</div>
<div class="t" style="left:57.0px;top:177.5px;font-size:8.6px;line-height:8.6px;color:#333;transform:scaleX(0.979);">T16</div>
<div class="t" style="left:74.6px;top:200.8px;width:30.0px;text-align:center;font-size:8.6px;line-height:8.6px;color:#3a3a3a;">B</div>
<div class="t" style="left:120.2px;top:200.8px;width:30.0px;text-align:center;font-size:8.6px;line-height:8.6px;color:#3a3a3a;">C</div>
<div class="t" style="left:165.5px;top:200.8px;width:30.0px;text-align:center;font-size:8.6px;line-height:8.6px;color:#3a3a3a;">D</div>
<div class="t" style="left:211.1px;top:200.8px;width:30.0px;text-align:center;font-size:8.6px;line-height:8.6px;color:#3a3a3a;">E</div>
<div class="t" style="left:256.8px;top:200.8px;width:30.0px;text-align:center;font-size:8.6px;line-height:8.6px;color:#3a3a3a;">F</div>
<div class="t" style="left:302.5px;top:200.8px;width:30.0px;text-align:center;font-size:8.6px;line-height:8.6px;color:#3a3a3a;">G</div>
<div class="t" style="left:348.2px;top:200.8px;width:30.0px;text-align:center;font-size:8.6px;line-height:8.6px;color:#3a3a3a;">H</div>
<div class="t" style="left:393.9px;top:200.8px;width:30.0px;text-align:center;font-size:8.6px;line-height:8.6px;color:#3a3a3a;">I</div>
<div class="t" style="left:439.6px;top:200.8px;width:30.0px;text-align:center;font-size:8.6px;line-height:8.6px;color:#3a3a3a;">J</div>
<div class="t" style="left:485.3px;top:200.8px;width:30.0px;text-align:center;font-size:8.6px;line-height:8.6px;color:#3a3a3a;">K</div>
<div class="t" style="left:531.0px;top:200.8px;width:30.0px;text-align:center;font-size:8.6px;line-height:8.6px;color:#3a3a3a;">L</div>
<div class="t" style="left:576.7px;top:200.8px;width:30.0px;text-align:center;font-size:8.6px;line-height:8.6px;color:#3a3a3a;">M</div>
<div class="t" style="left:622.1px;top:200.8px;width:30.0px;text-align:center;font-size:8.6px;line-height:8.6px;color:#3a3a3a;">N</div>
<div class="t" style="left:667.4px;top:200.8px;width:30.0px;text-align:center;font-size:8.6px;line-height:8.6px;color:#3a3a3a;">O</div>
<div class="t" style="left:713.0px;top:200.8px;width:30.0px;text-align:center;font-size:8.6px;line-height:8.6px;color:#3a3a3a;">P</div>
<div class="t" style="left:757.5px;top:200.8px;width:30.0px;text-align:center;font-size:8.6px;line-height:8.6px;color:#3a3a3a;">Q</div>
<div class="t" style="left:42.0px;top:215.7px;width:30.0px;text-align:center;font-size:9.3px;line-height:9.3px;color:#3a3a3a;">7</div>
<div class="t" style="left:42.0px;top:230.3px;width:30.0px;text-align:center;font-size:9.3px;line-height:9.3px;color:#3a3a3a;">8</div>
<div class="t" style="left:42.0px;top:244.6px;width:30.0px;text-align:center;font-size:9.3px;line-height:9.3px;color:#3a3a3a;">9</div>
<div class="t" style="left:42.0px;top:258.8px;width:30.0px;text-align:center;font-size:9.3px;line-height:9.3px;color:#3a3a3a;">10</div>
<div class="t" style="left:42.0px;top:273.1px;width:30.0px;text-align:center;font-size:9.3px;line-height:9.3px;color:#3a3a3a;">11</div>
<div class="t" style="left:42.0px;top:287.3px;width:30.0px;text-align:center;font-size:9.3px;line-height:9.3px;color:#3a3a3a;">12</div>
<div class="t" style="left:42.0px;top:301.6px;width:30.0px;text-align:center;font-size:9.3px;line-height:9.3px;color:#3a3a3a;">13</div>
<div class="t" style="left:42.0px;top:315.8px;width:30.0px;text-align:center;font-size:9.3px;line-height:9.3px;color:#3a3a3a;">14</div>
<div class="t" style="left:42.0px;top:330.1px;width:30.0px;text-align:center;font-size:9.3px;line-height:9.3px;color:#3a3a3a;">15</div>
<div class="t" style="left:42.0px;top:344.3px;width:30.0px;text-align:center;font-size:9.3px;line-height:9.3px;color:#217346;">16</div>
<div class="t" style="left:42.0px;top:358.6px;width:30.0px;text-align:center;font-size:9.3px;line-height:9.3px;color:#3a3a3a;">17</div>
<div class="t" style="left:42.0px;top:372.8px;width:30.0px;text-align:center;font-size:9.3px;line-height:9.3px;color:#3a3a3a;">18</div>
<div class="t" style="left:42.0px;top:387.1px;width:30.0px;text-align:center;font-size:9.3px;line-height:9.3px;color:#3a3a3a;">19</div>
<div class="t" style="left:42.0px;top:401.3px;width:30.0px;text-align:center;font-size:9.3px;line-height:9.3px;color:#3a3a3a;">20</div>
<div class="t" style="left:42.0px;top:415.6px;width:30.0px;text-align:center;font-size:9.3px;line-height:9.3px;color:#3a3a3a;">21</div>
<div class="t" style="left:42.0px;top:429.8px;width:30.0px;text-align:center;font-size:9.3px;line-height:9.3px;color:#3a3a3a;">22</div>
<div class="t" style="left:42.0px;top:444.1px;width:30.0px;text-align:center;font-size:9.3px;line-height:9.3px;color:#3a3a3a;">23</div>
<div class="t" style="left:42.0px;top:458.3px;width:30.0px;text-align:center;font-size:9.3px;line-height:9.3px;color:#3a3a3a;">24</div>
<div class="t" style="left:42.0px;top:472.6px;width:30.0px;text-align:center;font-size:9.3px;line-height:9.3px;color:#3a3a3a;">25</div>
<div class="t" style="left:42.0px;top:486.8px;width:30.0px;text-align:center;font-size:9.3px;line-height:9.3px;color:#3a3a3a;">26</div>
<div class="t" style="left:42.0px;top:501.1px;width:30.0px;text-align:center;font-size:9.3px;line-height:9.3px;color:#3a3a3a;">27</div>
<div class="t" style="left:42.0px;top:515.3px;width:30.0px;text-align:center;font-size:9.3px;line-height:9.3px;color:#3a3a3a;">28</div>
<div class="t" style="left:42.0px;top:529.6px;width:30.0px;text-align:center;font-size:9.3px;line-height:9.3px;color:#3a3a3a;">29</div>
<div class="t" style="left:42.0px;top:540.3px;width:30.0px;text-align:center;font-size:9.3px;line-height:9.3px;color:#3a3a3a;">30</div>
<div class="t" style="left:42.0px;top:554.5px;width:30.0px;text-align:center;font-size:9.3px;line-height:9.3px;color:#3a3a3a;">35</div>
<div class="t" style="left:42.0px;top:568.7px;width:30.0px;text-align:center;font-size:9.3px;line-height:9.3px;color:#3a3a3a;">36</div>
<div class="t" style="left:42.0px;top:583.0px;width:30.0px;text-align:center;font-size:9.3px;line-height:9.3px;color:#3a3a3a;">37</div>
<div class="t" style="left:42.0px;top:597.3px;width:30.0px;text-align:center;font-size:9.3px;line-height:9.3px;color:#3a3a3a;">38</div>
<div class="t" style="left:379.0px;top:214.4px;font-size:9.6px;line-height:9.6px;color:#fff;font-weight:bold;transform:scaleX(1.019);">Temp (A) vs. Press (B)</div>
<div class="t" style="left:400.5px;top:237.4px;font-size:10.8px;line-height:10.8px;color:#000;font-weight:bold;transform:scaleX(1.071);">Yield Y-Hat</div>
<div class="t" style="left:337.6px;top:254.3px;font-size:10.8px;line-height:10.8px;color:#000;font-weight:bold;transform:scaleX(1.037);">Surface Plot Temp (A) vs. Press (B)</div>
<div class="t" style="left:316.8px;top:564.2px;font-size:12px;line-height:12px;color:#111;font-weight:bold;transform:scaleX(0.955);">Temp (A)</div>
<div class="t" style="left:590.6px;top:487.9px;font-size:12px;line-height:12px;color:#111;font-weight:bold;transform:scaleX(1.017);">Press (B)</div>
<div class="t" style="left:720.7px;top:327.5px;font-size:11.2px;line-height:11.2px;color:#1f1f1f;transform:scaleX(1.058);">101.2-101.5</div>
<div class="t" style="left:720.7px;top:349.2px;font-size:11.2px;line-height:11.2px;color:#1f1f1f;transform:scaleX(1.058);">100.9-101.2</div>
<div class="t" style="left:720.7px;top:371.0px;font-size:11.2px;line-height:11.2px;color:#1f1f1f;transform:scaleX(1.058);">100.6-100.9</div>
<div class="t" style="left:720.7px;top:392.7px;font-size:11.2px;line-height:11.2px;color:#1f1f1f;transform:scaleX(1.058);">100.3-100.6</div>
<div class="t" style="left:720.7px;top:414.4px;font-size:11.2px;line-height:11.2px;color:#1f1f1f;transform:scaleX(1.080);">100-100.3</div>
<div class="t" style="left:720.7px;top:436.1px;font-size:11.2px;line-height:11.2px;color:#1f1f1f;transform:scaleX(1.084);">99.7-100</div>
<div class="t" style="left:720.7px;top:457.8px;font-size:11.2px;line-height:11.2px;color:#1f1f1f;letter-spacing:0.14px;transform:scaleX(1.120);">99.4-99.7</div>
<div class="t" style="left:720.7px;top:479.6px;font-size:11.2px;line-height:11.2px;color:#1f1f1f;letter-spacing:0.14px;transform:scaleX(1.120);">99.1-99.4</div>
<div class="t" style="left:720.7px;top:501.3px;font-size:11.2px;line-height:11.2px;color:#1f1f1f;letter-spacing:0.14px;transform:scaleX(1.120);">98.8-99.1</div>
<div class="t" style="left:720.7px;top:523.0px;font-size:11.2px;line-height:11.2px;color:#1f1f1f;letter-spacing:0.14px;transform:scaleX(1.120);">98.5-98.8</div>
<div class="t" style="left:157.7px;top:497.2px;font-size:8.3px;line-height:8.3px;color:#202020;transform:scaleX(0.901);">98.5</div>
<div class="t" style="left:156.9px;top:480.3px;font-size:8.3px;line-height:8.3px;color:#202020;transform:scaleX(0.901);">98.8</div>
<div class="t" style="left:156.1px;top:463.1px;font-size:8.3px;line-height:8.3px;color:#202020;transform:scaleX(0.901);">99.1</div>
<div class="t" style="left:155.2px;top:445.9px;font-size:8.3px;line-height:8.3px;color:#202020;transform:scaleX(0.901);">99.4</div>
<div class="t" style="left:154.4px;top:428.4px;font-size:8.3px;line-height:8.3px;color:#202020;transform:scaleX(0.901);">99.7</div>
<div class="t" style="left:155.7px;top:410.8px;font-size:8.3px;line-height:8.3px;color:#202020;letter-spacing:-0.04px;transform:scaleX(0.900);">100</div>
<div class="t" style="left:148.5px;top:393.1px;font-size:8.3px;line-height:8.3px;color:#202020;letter-spacing:-0.00px;transform:scaleX(0.900);">100.3</div>
<div class="t" style="left:147.7px;top:375.2px;font-size:8.3px;line-height:8.3px;color:#202020;letter-spacing:-0.00px;transform:scaleX(0.900);">100.6</div>
<div class="t" style="left:146.8px;top:357.1px;font-size:8.3px;line-height:8.3px;color:#202020;letter-spacing:-0.00px;transform:scaleX(0.900);">100.9</div>
<div class="t" style="left:145.9px;top:338.8px;font-size:8.3px;line-height:8.3px;color:#202020;letter-spacing:-0.00px;transform:scaleX(0.900);">101.2</div>
<div class="t" style="left:145.0px;top:320.4px;font-size:8.3px;line-height:8.3px;color:#202020;letter-spacing:-0.00px;transform:scaleX(0.900);">101.5</div>
<div class="t" style="left:176.9px;top:507.4px;font-size:8.3px;line-height:8.3px;color:#202020;transform:scaleX(0.909);">-1</div>
<div class="t" style="left:509.8px;top:538.9px;font-size:8.3px;line-height:8.3px;color:#202020;transform:scaleX(0.909);">-1</div>
<div class="t" style="left:208.2px;top:512.3px;font-size:8.3px;line-height:8.3px;color:#202020;transform:scaleX(0.907);">-0.75</div>
<div class="t" style="left:519.7px;top:523.2px;font-size:8.3px;line-height:8.3px;color:#202020;transform:scaleX(0.907);">-0.75</div>
<div class="t" style="left:247.8px;top:517.2px;font-size:8.3px;line-height:8.3px;color:#202020;transform:scaleX(0.912);">-0.5</div>
<div class="t" style="left:528.6px;top:508.5px;font-size:8.3px;line-height:8.3px;color:#202020;transform:scaleX(0.912);">-0.5</div>
<div class="t" style="left:284.3px;top:522.3px;font-size:8.3px;line-height:8.3px;color:#202020;transform:scaleX(0.907);">-0.25</div>
<div class="t" style="left:536.4px;top:495.2px;font-size:8.3px;line-height:8.3px;color:#202020;transform:scaleX(0.907);">-0.25</div>
<div class="t" style="left:330.4px;top:527.6px;font-size:8.3px;line-height:8.3px;color:#202020;letter-spacing:-0.05px;transform:scaleX(0.900);">0</div>
<div class="t" style="left:544.0px;top:482.7px;font-size:8.3px;line-height:8.3px;color:#202020;letter-spacing:-0.05px;transform:scaleX(0.900);">0</div>
<div class="t" style="left:365.9px;top:533.0px;font-size:8.3px;line-height:8.3px;color:#202020;transform:scaleX(0.901);">0.25</div>
<div class="t" style="left:551.5px;top:470.2px;font-size:8.3px;line-height:8.3px;color:#202020;transform:scaleX(0.901);">0.25</div>
<div class="t" style="left:409.9px;top:538.5px;font-size:8.3px;line-height:8.3px;color:#202020;transform:scaleX(0.904);">0.5</div>
<div class="t" style="left:558.2px;top:460.1px;font-size:8.3px;line-height:8.3px;color:#202020;transform:scaleX(0.904);">0.5</div>
<div class="t" style="left:450.9px;top:544.3px;font-size:8.3px;line-height:8.3px;color:#202020;transform:scaleX(0.901);">0.75</div>
<div class="t" style="left:564.5px;top:449.9px;font-size:8.3px;line-height:8.3px;color:#202020;transform:scaleX(0.901);">0.75</div>
<div class="t" style="left:500.5px;top:550.1px;font-size:8.3px;line-height:8.3px;color:#202020;letter-spacing:-0.05px;transform:scaleX(0.900);">1</div>
<div class="t" style="left:567.8px;top:440.4px;font-size:8.3px;line-height:8.3px;color:#202020;letter-spacing:-0.05px;transform:scaleX(0.900);">1</div>
</div></div>
</body>
</html>
